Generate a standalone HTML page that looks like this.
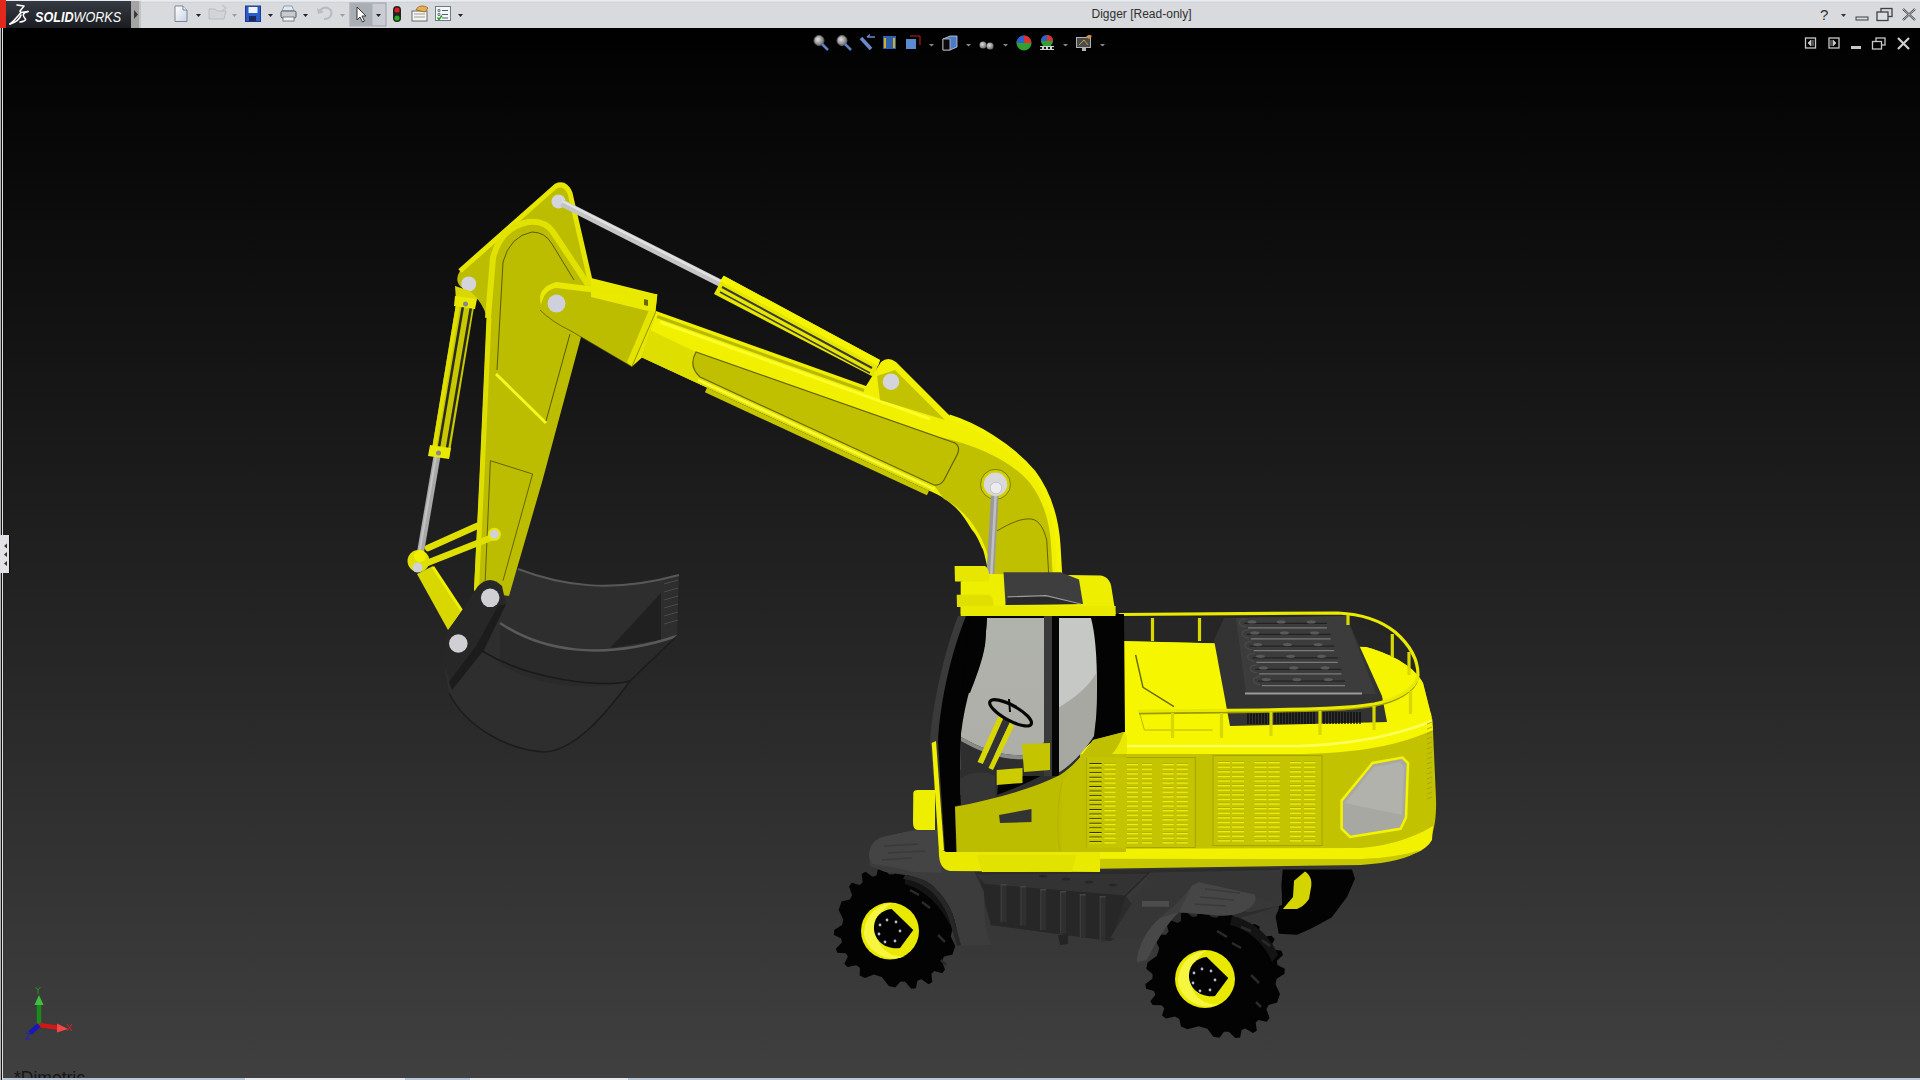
<!DOCTYPE html>
<html><head><meta charset="utf-8">
<style>
html,body{margin:0;padding:0;width:1920px;height:1080px;overflow:hidden;background:#000;font-family:"Liberation Sans",sans-serif;}
#view{position:absolute;left:0;top:28px;width:1920px;height:1052px;background:linear-gradient(#000 0%,#030303 3%,#202020 50%,#404040 100%);}
svg{position:absolute;left:0;top:0;}
#ttl{position:absolute;left:1091.5px;top:7px;font-size:12px;color:#303030;white-space:nowrap;}
#dim{position:absolute;left:14px;top:1067.5px;font-size:17.5px;line-height:20px;color:#141414;white-space:nowrap;}
#logo{position:absolute;left:35px;top:9px;font-size:14px;line-height:16px;color:#fff;font-style:italic;white-space:nowrap;transform:scaleX(0.9);transform-origin:0 0;}
#logo b{font-weight:bold;}
</style></head><body>
<div id="view"></div>
<svg id="exc" width="1920" height="1080" viewBox="0 0 1920 1080">
<defs>
<linearGradient id="rod" x1="0" y1="0" x2="1" y2="0"><stop offset="0" stop-color="#8a8a8a"/><stop offset="0.5" stop-color="#d8d8d8"/><stop offset="1" stop-color="#9a9a9a"/></linearGradient>
<linearGradient id="gl" x1="0" y1="0" x2="0" y2="1"><stop offset="0" stop-color="#b0b2ac"/><stop offset="1" stop-color="#acaea6"/></linearGradient>
</defs>
<!-- ========== rear right wheel ========== -->
<path d="M1282.8,869.5 L1352,869.5 L1355,878.7 L1347,897 L1331.6,917.4 L1311.3,928.6 L1297,934.7 L1278.7,933.7 L1275.6,916.4 L1278.7,909 Z" fill="#030303"/>
<path d="M1282.8,909 L1293,897 L1294,880.7 L1305,871.6 C1310,875 1312,880 1311.3,886 L1309,899 C1305,905 1300,908 1297,909 Z" fill="#d4d400"/>
<!-- ========== undercarriage ========== -->
<path d="M975,872 L1280,868 L1282,905 L1240,918 L1126,930 L1111,941 L991,925 Z" fill="#2c2c2c"/>
<path d="M1126,896 L1150,872.5 L1280,870 L1282,905 L1250,912 L1180,905 L1140,915 Z" fill="#383838"/>
<path d="M980,876 L1150,872.5 L1126,896 L1111,941 L991,925 Z" fill="#272727"/>
<path d="M976,874.6 L1147.5,873.5 L1124.6,895.4 L985,884 Z" fill="#333"/>
<g fill="#262626"><ellipse cx="1043" cy="876" rx="4" ry="1.5"/><ellipse cx="1066" cy="879" rx="4" ry="1.5"/><ellipse cx="1089" cy="882" rx="4" ry="1.5"/><ellipse cx="1113" cy="885" rx="4" ry="1.5"/></g>
<g><rect x="1000.6" y="884" width="6" height="38.0" fill="#2f2f2f"/><rect x="1000.6" y="884" width="1.2" height="38.0" fill="#3c3c3c"/><rect x="1000.6" y="884" width="6" height="1.5" fill="#444"/><rect x="1020.4" y="886" width="6" height="39.5" fill="#2f2f2f"/><rect x="1020.4" y="886" width="1.2" height="39.5" fill="#3c3c3c"/><rect x="1020.4" y="886" width="6" height="1.5" fill="#444"/><rect x="1040.2" y="889" width="6" height="41.0" fill="#2f2f2f"/><rect x="1040.2" y="889" width="1.2" height="41.0" fill="#3c3c3c"/><rect x="1040.2" y="889" width="6" height="1.5" fill="#444"/><rect x="1060.0" y="891" width="6" height="42.5" fill="#2f2f2f"/><rect x="1060.0" y="891" width="1.2" height="42.5" fill="#3c3c3c"/><rect x="1060.0" y="891" width="6" height="1.5" fill="#444"/><rect x="1079.8" y="894" width="6" height="44.0" fill="#2f2f2f"/><rect x="1079.8" y="894" width="1.2" height="44.0" fill="#3c3c3c"/><rect x="1079.8" y="894" width="6" height="1.5" fill="#444"/><rect x="1099.6" y="896" width="6" height="45.5" fill="#2f2f2f"/><rect x="1099.6" y="896" width="1.2" height="45.5" fill="#3c3c3c"/><rect x="1099.6" y="896" width="6" height="1.5" fill="#444"/></g>
<path d="M1155,890 L1225,893 L1222,897 L1152,895 Z" fill="#4a4a4a"/>
<path d="M1058,935 L1068,935 L1068,944 L1060,945 Z" fill="#242424"/>
<!-- ========== front wheel ========== -->
<path d="M955.3,946.0 L952.5,954.5 L944.0,956.5 L941.9,960.9 L945.0,969.5 L942.2,973.3 L934.3,971.1 L931.4,973.7 L932.3,982.1 L928.5,984.3 L921.4,979.3 L917.6,980.5 L915.8,988.2 L911.2,988.7 L905.1,981.8 L900.5,981.4 L895.2,987.4 L888.8,986.0 L881.8,977.1 L874.0,974.5 L864.9,978.1 L859.7,975.6 L859.9,967.8 L856.3,965.2 L847.5,967.0 L844.3,963.8 L847.9,956.6 L845.9,953.3 L837.3,952.8 L835.8,948.7 L841.9,942.5 L841.3,938.5 L833.9,935.1 L834.2,930.0 L842.1,925.0 L843.2,919.6 L838.7,910.0 L841.5,901.5 L850.0,899.5 L852.1,895.1 L849.0,886.5 L851.8,882.7 L859.7,884.9 L862.6,882.3 L861.7,873.9 L865.5,871.7 L872.6,876.7 L876.4,875.5 L878.2,867.8 L882.8,867.3 L888.9,874.2 L893.5,874.6 L898.8,868.6 L905.2,870.0 L912.2,878.9 L920.0,881.5 L929.1,877.9 L934.3,880.4 L934.1,888.2 L937.7,890.8 L946.5,889.0 L949.7,892.2 L946.1,899.4 L948.1,902.7 L956.7,903.2 L958.2,907.3 L952.1,913.5 L952.7,917.5 L960.1,920.9 L959.8,926.0 L951.9,931.0 L950.8,936.4 Z" fill="#030303"/>
<path d="M905,876 C925,880 945,895 955,915 L950,925 C940,905 925,890 905,884 Z" fill="#141414"/>
<g stroke="#2a2a2a" stroke-width="2.5"><path d="M910,890 L919,895"/><path d="M922,902 L930,908"/><path d="M932,888 L940,893"/><path d="M938,935 L945,942"/><path d="M941,960 L946,965"/></g>
<ellipse cx="890" cy="931" rx="29" ry="28.5" fill="#e8e800"/>
<path d="M864,935 C864,915 878,904 892,903 C880,910 874,925 878,940 C882,952 895,958 905,956 C895,962 870,958 864,935 Z" fill="#f6f640"/>
<path d="M891.7,909 L913.3,930 L900,948 C885,950 873,940 874,926 C875,916 882,910 891.7,909 Z" fill="#020202"/>
<g fill="#b8b8d0"><circle cx="887" cy="920" r="1.4"/><circle cx="896" cy="922" r="1.4"/><circle cx="900" cy="931" r="1.4"/><circle cx="895" cy="941" r="1.4"/><circle cx="885" cy="942" r="1.4"/><circle cx="879" cy="934" r="1.4"/><circle cx="880" cy="925" r="1.4"/></g>
<!-- front fender -->
<path d="M869,857 C869,845 875,838 887,836 L912,830.6 L950,830 L976,875 L984,892 L985,925 L991,945 L961,945 L955.6,925 C953,910 945,898 934,887 C925,879 915,876 905,875 L885,872 L870,866 Z" fill="#3c3c3c"/>
<path d="M905,875 C915,876 925,879 934,887 C945,898 953,910 955.6,925 L961,945 L957,946 L951,926 C948,912 941,901 931,891 C922,884 913,880 903,879 Z" fill="#262626"/>
<path d="M869,857 C869,845 875,838 887,836 L912,830.6 L938,830 L942,873 L912,871.7 L894,867.2 L872,864 Z" fill="#444"/>
<path d="M884,846 L918,844 M888,853 L925,851 M882,860 L912,858" stroke="#3a3a3a" stroke-width="1.3"/>
<!-- ========== rear left wheel ========== -->
<path d="M1280.0,994.1 L1277.1,1002.6 L1268.6,1004.9 L1266.4,1009.3 L1269.6,1017.8 L1266.8,1021.7 L1258.7,1019.9 L1255.7,1022.6 L1256.8,1030.8 L1252.9,1033.1 L1245.4,1028.6 L1241.6,1030.0 L1240.1,1037.5 L1235.4,1038.1 L1228.8,1031.8 L1224.0,1031.7 L1219.5,1037.7 L1213.4,1036.7 L1207.4,1028.8 L1198.8,1026.3 L1187.5,1029.2 L1180.9,1026.6 L1179.4,1018.9 L1175.0,1016.5 L1165.9,1018.5 L1162.0,1015.4 L1164.3,1008.3 L1161.5,1005.2 L1152.6,1005.1 L1150.3,1001.3 L1155.3,994.9 L1154.0,991.1 L1146.0,988.7 L1145.4,984.1 L1152.4,978.7 L1152.6,974.1 L1146.2,968.7 L1147.6,962.5 L1156.7,956.0 L1159.3,948.3 L1155.2,939.6 L1157.7,934.6 L1166.0,934.7 L1168.6,931.2 L1166.3,922.9 L1169.7,919.8 L1177.5,923.0 L1181.0,921.0 L1181.1,913.1 L1185.4,911.6 L1192.5,917.1 L1196.7,916.5 L1199.6,909.6 L1204.9,909.7 L1211.0,916.8 L1216.5,917.8 L1223.4,912.9 L1233.0,915.7 L1239.7,924.5 L1245.5,926.8 L1254.7,923.9 L1259.6,926.6 L1259.0,934.1 L1262.6,936.8 L1271.6,935.8 L1274.7,939.2 L1271.0,946.1 L1273.0,949.5 L1281.5,950.7 L1283.0,954.9 L1276.9,960.8 L1277.5,964.9 L1284.8,968.7 L1284.5,973.8 L1276.7,978.8 L1275.5,984.3 Z" fill="#030303"/>
<path d="M1232,916 C1252,920 1270,935 1278,955 L1272,962 C1265,945 1250,930 1230,925 Z" fill="#141414"/>
<g stroke="#2a2a2a" stroke-width="2.5"><path d="M1217,931 L1227,937"/><path d="M1232,943 L1241,948"/><path d="M1241,927 L1251,931"/><path d="M1251,975 L1259,983"/><path d="M1256,1002 L1261,1007"/><path d="M1262,940 L1270,946"/></g>
<ellipse cx="1205" cy="979" rx="30" ry="29" fill="#e8e800"/>
<path d="M1178,983 C1178,963 1192,952 1206,951 C1194,958 1188,973 1192,988 C1196,1000 1209,1006 1219,1004 C1209,1010 1184,1006 1178,983 Z" fill="#f6f640"/>
<path d="M1206.7,957 L1228.3,978 L1215,996 C1200,998 1188,988 1189,974 C1190,964 1197,958 1206.7,957 Z" fill="#020202"/>
<g fill="#b8b8d0"><circle cx="1202" cy="969" r="1.4"/><circle cx="1211" cy="971" r="1.4"/><circle cx="1215" cy="980" r="1.4"/><circle cx="1210" cy="990" r="1.4"/><circle cx="1200" cy="991" r="1.4"/><circle cx="1193" cy="983" r="1.4"/><circle cx="1194" cy="973" r="1.4"/></g>
<!-- rear fender -->
<path d="M1151,873 L1281,872 L1282,905 L1255.6,896.7 L1240,912 L1180,912 L1140,938 L1110,938 Z" fill="#363636"/>
<path d="M1142,901 L1169,901 L1169,906.7 L1142,906.7 Z" fill="#4c4c4c"/>
<path d="M1136.7,962.2 C1138,945 1148,928 1160,918 C1168,910 1178,905 1192,885.6 L1198.9,882.2 L1254.4,894.4 C1258,900 1252,907 1247.8,908.9 C1240,914 1232,915.6 1220,915.6 L1178.9,912.2 C1170,920 1160,935 1152,950 L1146.7,960 Z" fill="#3e3e3e"/>
<path d="M1192.2,885.6 L1198.9,882.2 L1254.4,894.4 C1258,900 1252,907 1247.8,908.9 C1240,914 1232,915.6 1220,915.6 L1178.9,912.2 Z" fill="#464646"/>
<path d="M1136.7,962.2 C1138,945 1148,928 1160,918 L1178.9,912.2 C1170,920 1160,935 1152,950 L1146.7,960 Z" fill="#484848"/>
<path d="M1205,889 L1240,893 M1200,897 L1234,900 M1195,904 L1226,906" stroke="#3a3a3a" stroke-width="1.3"/>
<!-- ========== bucket ========== -->
<path d="M518,569 C560,585 610,594 679,575 L677,636 L630,681 C605,715 575,750 545,752 C505,750 465,725 449,693 L444,664 L447,633 L484,581 Z" fill="#2e2e2e"/>
<path d="M500,623 C540,650 600,662 677,636 L630,681 C600,690 540,690 500,664 Z" fill="#2a2a2a"/>
<path d="M610,648 L661,593 L661,640 Z" fill="#202020"/>
<path d="M518,569 C560,585 610,594 679,575" stroke="#585858" stroke-width="2" fill="none"/>
<path d="M500,623 C540,650 600,662 677,636" stroke="#5a5a5a" stroke-width="2.5" fill="none"/>
<path d="M482,651 C530,680 600,688 630,681" stroke="#1a1a1a" stroke-width="1.5" fill="none"/>
<path d="M677,636 L630,681 C605,715 575,750 545,752 C505,750 465,725 449,693" stroke="#1c1c1c" stroke-width="1.5" fill="none"/>
<g stroke="#4a4a4a" stroke-width="1"><line x1="664" y1="584" x2="678" y2="580"/><line x1="664" y1="592" x2="678" y2="588"/><line x1="664" y1="600" x2="678" y2="596"/><line x1="664" y1="608" x2="678" y2="604"/><line x1="664" y1="616" x2="678" y2="612"/><line x1="664" y1="624" x2="678" y2="620"/></g>

<!-- ========== stick ========== -->
<path d="M556,186 Q565,182 570,193 L592,289 L580.5,339 L542.6,480 L509,596 L474,591 L479.6,480 L487,317 Q482,302 474,296 L461,287 Q454,280 460,271 Z" fill="#bcbc00"/>
<path d="M460,271 L556,186 Q565,182 570,193 L592,289" stroke="#e6e600" stroke-width="5" fill="none" stroke-linejoin="round"/>
<path d="M488,318 L493,258 Q500,228 528,222 Q545,220 553,232 L591,289" stroke="#e2e200" stroke-width="6" fill="none"/>
<path d="M497,370 L503,262 Q510,236 532,232 Q545,232 552,244 L574,280" stroke="#1a1a00" stroke-width="1" fill="none" opacity="0.6"/>
<line x1="496" y1="374" x2="546" y2="423" stroke="#f6f620" stroke-width="3"/>
<line x1="570" y1="334" x2="546" y2="421" stroke="#1a1a00" stroke-width="1" opacity="0.6"/>
<path d="M485.2,580.7 L490.4,460.7 L532.6,474 L503,580.7" stroke="#2a2a00" stroke-width="1" fill="none" opacity="0.6"/>
<path d="M489,318 L481.8,480 L476.5,590" stroke="#dede00" stroke-width="5"/>
<circle cx="558.5" cy="201.5" r="7" fill="#d4d4dc"/>
<circle cx="468.7" cy="283.9" r="7.5" fill="#d4d4dc"/>

<!-- ========== stick cylinder ========== -->
<line x1="437" y1="456" x2="420" y2="555" stroke="#a8a8a8" stroke-width="7"/>
<line x1="436" y1="456" x2="419" y2="555" stroke="#c4c4c4" stroke-width="2"/>
<path d="M455,286 L470,291 L478,299 L456,300 Z" fill="#d8d800"/>
<path d="M457,298 L475,301 L449,458 L431,455 Z" fill="#c8c800"/>
<path d="M457,298 L461,299 L435,456 L431,455 Z" fill="#e0e000"/>
<line x1="463" y1="306" x2="438" y2="453" stroke="#2a2a1a" stroke-width="2.5"/>
<line x1="471" y1="307" x2="446" y2="454" stroke="#2a2a1a" stroke-width="2.5"/>
<path d="M455,296 L477,299 L475,309 L454,306 Z" fill="#e8e800"/>
<path d="M430,445 L451,448 L449,459 L428,456 Z" fill="#e8e800"/>
<circle cx="465.5" cy="304" r="2.5" fill="#888"/>
<circle cx="438.5" cy="453" r="2.5" fill="#888"/>

<!-- ========== links ========== -->
<path d="M417,574 L433,566 L462,611 L448,630 Z" fill="#d8d800"/>
<line x1="433" y1="567" x2="462" y2="611" stroke="#f0f000" stroke-width="3"/>
<line x1="428" y1="548" x2="477" y2="526" stroke="#e0e000" stroke-width="6.5" stroke-linecap="round"/>
<line x1="422" y1="565" x2="493" y2="537" stroke="#e0e000" stroke-width="6.5" stroke-linecap="round"/>
<circle cx="494.4" cy="534.3" r="6.5" fill="#e8e800"/>
<circle cx="494.4" cy="534.3" r="4.5" fill="#d0d0d8"/>
<circle cx="418.5" cy="561" r="11" fill="#e0e000"/>
<circle cx="420" cy="556" r="6" fill="#f0f000"/>
<circle cx="417.6" cy="567.6" r="5" fill="#d0d0d8"/>
<path d="M478,586 Q490,574 502,586 L506,604 L482,651 L451,684 L444,664 L447,633 Z" fill="#272727"/>
<path d="M498,606 L506,604 L484,650 L452,690 L449,682 L476,646 Z" fill="#1c1c1c"/>
<circle cx="490.2" cy="597.8" r="9.3" fill="#cfcfd4"/>
<circle cx="458.3" cy="643.5" r="9.3" fill="#cfcfd4"/>

<!-- ========== boom ========== -->
<path d="M656,311 L866,386 L881,362 Q888,356 896,362 L951,417 C975,425 1010,445 1033,472 C1048,492 1056,515 1058,545 L1060,580 L989,580 L987,566 C985,556 983,548 982,548 C978,538 975,533 972,530 C966,520 962,514 956,508 C950,502 940,495 930,491 L642,357.4 Z" fill="#f0f000"/>
<path d="M696,352 L940,437 C985,447 1015,465 1030,483 C1043,500 1050,522 1051,545 L1053,580 L993,580 C991,562 986,547 979,534 C970,518 958,506 944,499 L934,485 L700,377 Q688,366 696,352 Z" fill="#c0c000"/>
<path d="M650,330 L696,352 Q688,366 700,377 L934,485 L930,491 L642,357.4 Z" fill="#dede00"/>
<path d="M706,390 L928,493" stroke="#c4c400" stroke-width="5"/>
<path d="M700,377 Q688,366 696,352 L955,443 Q961,447 957,455 L944,480 Q940,486 934,485 Z" fill="none" stroke="#4a4a00" stroke-width="1.2" opacity="0.8"/>
<path d="M698,380 L934,489" stroke="#f8f830" stroke-width="3"/>
<path d="M657,316.5 L864,390.5" stroke="#b8b800" stroke-width="3"/>
<path d="M660,322 L930,419" stroke="#ffff30" stroke-width="3" opacity="0.8"/>
<path d="M877,376 L895,370 L945,420 L880,400 Z" fill="#c2c200"/>
<path d="M949,417 C975,425 1010,445 1033,472 C1048,492 1056,515 1058,545 L1060,580" stroke="#f4f400" stroke-width="5" fill="none"/>
<path d="M997,531 C1010,523 1022,518 1031,519 C1040,520 1044,530 1046.7,540 L1049,580" stroke="#3a3a00" stroke-width="1" fill="none" opacity="0.7"/>
<circle cx="891" cy="381.7" r="8.3" fill="#d4d4dc"/>
<circle cx="995.5" cy="484.3" r="15" fill="#d0d000" stroke="#6a6a00" stroke-width="0.8"/>
<circle cx="995.5" cy="484.3" r="11.7" fill="#d8d8dc"/>
<circle cx="996" cy="488" r="5.8" fill="#ececf0" stroke="#b0b0b0" stroke-width="0.6"/>
<line x1="994.8" y1="496" x2="990.4" y2="575" stroke="#9a9a9a" stroke-width="7.8"/>
<line x1="995.6" y1="496" x2="991.2" y2="575" stroke="#c0c0c0" stroke-width="2.5"/>

<!-- ========== bracket (boom end) ========== -->
<path d="M540,310 Q534,290 556,282 L657.3,294.4 L655.3,312.8 L631.8,366.7 L571,331 Q552,322 540,310 Z" fill="#bcbc00"/>
<path d="M591,278 L657.3,294.4 L655.3,312.8 L591,297 Z" fill="#eaea00"/>
<path d="M644,299 L648,300 L648,306 L644,305 Z" fill="#6a6a00"/>
<path d="M541,305 Q536,288 556,282 L657.3,294.4 L655.3,300 L556,288 Q544,290 541,305 Z" fill="#e8e800"/>
<path d="M655.3,312.8 L656,313 L642,357.4 L631.8,366.7 Z" fill="#e6e600"/>
<path d="M655.3,312.8 L631.8,366.7 L627,362 L649,310 Z" fill="#e4e400"/>
<path d="M655.3,312.8 L631.8,366.7" stroke="#8a8a00" stroke-width="0.8"/>
<path d="M540,310 Q552,322 571,331 L631.8,366.7" stroke="#3a3a00" stroke-width="1" fill="none" opacity="0.6"/>
<circle cx="556.5" cy="303.6" r="9" fill="#d0d0dc"/>

<!-- ========== boom cylinder ========== -->
<line x1="562" y1="203" x2="722" y2="284" stroke="#c4c4c4" stroke-width="7.5"/>
<line x1="562" y1="201" x2="722" y2="282" stroke="#e2e2e2" stroke-width="2.5"/>
<path d="M723.7,275.7 L880,360 L873.7,377 L714,294 Z" fill="#e6e600"/>
<line x1="722" y1="287" x2="872" y2="368" stroke="#3a3a2a" stroke-width="2"/>
<line x1="720" y1="292" x2="870" y2="373" stroke="#3a3a2a" stroke-width="1.5"/>
<path d="M723.7,275.7 L880,360 L878,366 L720,281 Z" fill="#f4f400"/>

<!-- ========== body ========== -->
<path d="M1118,617 L1340,616 L1400,640 L1366,647 L1120,642 Z" fill="#262626"/>
<!-- whole body base -->
<path d="M1120,641 L1366,647 C1395,655 1415,668 1423,683 L1432.5,720 L1436,798 C1437,830 1430,848 1417,851 C1395,858 1380,862 1361,864 L1080,868 L1080,641 Z" fill="#c2c200"/>
<!-- deck surface -->
<path d="M1120,641 L1366,647 C1395,655 1415,668 1423,683 L1431,715 C1400,728 1360,738 1300,740 L1120,740 Z" fill="#f6f600"/>
<!-- bright band -->
<path d="M1080,738 L1300,738 C1360,736 1400,726 1431,713 L1433,730 C1400,745 1360,753 1300,754 L1080,754 Z" fill="#f6f600"/>
<path d="M1080,746 L1300,746 C1360,744 1400,734 1432,721" stroke="#ffff70" stroke-width="2.5" fill="none" opacity="0.8"/>
<!-- lower rim -->
<path d="M1080,849 L1361,848 C1385,846 1410,840 1433,826 L1432,840 C1425,852 1410,856 1395,858 L1361,859 L1080,859 Z" fill="#f2f200"/>
<path d="M1080,858.7 L1361,859 C1385,858 1405,855 1420,850 C1410,858 1390,863 1361,865 L1080,869 Z" fill="#c8c800"/>
<!-- grille panels -->
<rect x="1086.6" y="757.5" width="108.7" height="90" fill="#c4c400"/>
<rect x="1213" y="755.6" width="109" height="90" fill="#c4c400"/>
<rect x="1086.6" y="757.5" width="108.7" height="90" stroke="#a0a000" stroke-width="0.9" fill="none"/>
<rect x="1213" y="755.6" width="109" height="90" stroke="#a0a000" stroke-width="0.9" fill="none"/>
<rect x="1089.4" y="763.0" width="12.2" height="1" fill="#303000"/>
<rect x="1089.4" y="764.0" width="12.2" height="1.3" fill="#e0e000"/>
<rect x="1089.4" y="767.6" width="12.2" height="1" fill="#303000"/>
<rect x="1089.4" y="768.6" width="12.2" height="1.3" fill="#e0e000"/>
<rect x="1089.4" y="772.2" width="12.2" height="1" fill="#303000"/>
<rect x="1089.4" y="773.2" width="12.2" height="1.3" fill="#e0e000"/>
<rect x="1089.4" y="776.8" width="12.2" height="1" fill="#303000"/>
<rect x="1089.4" y="777.8" width="12.2" height="1.3" fill="#e0e000"/>
<rect x="1089.4" y="781.4" width="12.2" height="1" fill="#303000"/>
<rect x="1089.4" y="782.4" width="12.2" height="1.3" fill="#e0e000"/>
<rect x="1089.4" y="786.0" width="12.2" height="1" fill="#303000"/>
<rect x="1089.4" y="787.0" width="12.2" height="1.3" fill="#e0e000"/>
<rect x="1089.4" y="790.6" width="12.2" height="1" fill="#303000"/>
<rect x="1089.4" y="791.6" width="12.2" height="1.3" fill="#e0e000"/>
<rect x="1089.4" y="795.2" width="12.2" height="1" fill="#303000"/>
<rect x="1089.4" y="796.2" width="12.2" height="1.3" fill="#e0e000"/>
<rect x="1089.4" y="799.8" width="12.2" height="1" fill="#303000"/>
<rect x="1089.4" y="800.8" width="12.2" height="1.3" fill="#e0e000"/>
<rect x="1089.4" y="804.4" width="12.2" height="1" fill="#303000"/>
<rect x="1089.4" y="805.4" width="12.2" height="1.3" fill="#e0e000"/>
<rect x="1089.4" y="809.0" width="12.2" height="1" fill="#303000"/>
<rect x="1089.4" y="810.0" width="12.2" height="1.3" fill="#e0e000"/>
<rect x="1089.4" y="813.6" width="12.2" height="1" fill="#303000"/>
<rect x="1089.4" y="814.6" width="12.2" height="1.3" fill="#e0e000"/>
<rect x="1089.4" y="818.2" width="12.2" height="1" fill="#303000"/>
<rect x="1089.4" y="819.2" width="12.2" height="1.3" fill="#e0e000"/>
<rect x="1089.4" y="822.8" width="12.2" height="1" fill="#303000"/>
<rect x="1089.4" y="823.8" width="12.2" height="1.3" fill="#e0e000"/>
<rect x="1089.4" y="827.4" width="12.2" height="1" fill="#303000"/>
<rect x="1089.4" y="828.4" width="12.2" height="1.3" fill="#e0e000"/>
<rect x="1089.4" y="832.0" width="12.2" height="1" fill="#303000"/>
<rect x="1089.4" y="833.0" width="12.2" height="1.3" fill="#e0e000"/>
<rect x="1089.4" y="836.6" width="12.2" height="1" fill="#303000"/>
<rect x="1089.4" y="837.6" width="12.2" height="1.3" fill="#e0e000"/>
<rect x="1089.4" y="841.2" width="12.2" height="1" fill="#303000"/>
<rect x="1089.4" y="842.2" width="12.2" height="1.3" fill="#e0e000"/>
<rect x="1104.4" y="763.0" width="11.2" height="1" fill="#b2b200"/>
<rect x="1104.4" y="764.0" width="11.2" height="1.3" fill="#eeee10"/>
<rect x="1104.4" y="767.6" width="11.2" height="1" fill="#b2b200"/>
<rect x="1104.4" y="768.6" width="11.2" height="1.3" fill="#eeee10"/>
<rect x="1104.4" y="772.2" width="11.2" height="1" fill="#b2b200"/>
<rect x="1104.4" y="773.2" width="11.2" height="1.3" fill="#eeee10"/>
<rect x="1104.4" y="776.8" width="11.2" height="1" fill="#b2b200"/>
<rect x="1104.4" y="777.8" width="11.2" height="1.3" fill="#eeee10"/>
<rect x="1104.4" y="781.4" width="11.2" height="1" fill="#b2b200"/>
<rect x="1104.4" y="782.4" width="11.2" height="1.3" fill="#eeee10"/>
<rect x="1104.4" y="786.0" width="11.2" height="1" fill="#b2b200"/>
<rect x="1104.4" y="787.0" width="11.2" height="1.3" fill="#eeee10"/>
<rect x="1104.4" y="790.6" width="11.2" height="1" fill="#b2b200"/>
<rect x="1104.4" y="791.6" width="11.2" height="1.3" fill="#eeee10"/>
<rect x="1104.4" y="795.2" width="11.2" height="1" fill="#b2b200"/>
<rect x="1104.4" y="796.2" width="11.2" height="1.3" fill="#eeee10"/>
<rect x="1104.4" y="799.8" width="11.2" height="1" fill="#b2b200"/>
<rect x="1104.4" y="800.8" width="11.2" height="1.3" fill="#eeee10"/>
<rect x="1104.4" y="804.4" width="11.2" height="1" fill="#b2b200"/>
<rect x="1104.4" y="805.4" width="11.2" height="1.3" fill="#eeee10"/>
<rect x="1104.4" y="809.0" width="11.2" height="1" fill="#b2b200"/>
<rect x="1104.4" y="810.0" width="11.2" height="1.3" fill="#eeee10"/>
<rect x="1104.4" y="813.6" width="11.2" height="1" fill="#b2b200"/>
<rect x="1104.4" y="814.6" width="11.2" height="1.3" fill="#eeee10"/>
<rect x="1104.4" y="818.2" width="11.2" height="1" fill="#b2b200"/>
<rect x="1104.4" y="819.2" width="11.2" height="1.3" fill="#eeee10"/>
<rect x="1104.4" y="822.8" width="11.2" height="1" fill="#b2b200"/>
<rect x="1104.4" y="823.8" width="11.2" height="1.3" fill="#eeee10"/>
<rect x="1104.4" y="827.4" width="11.2" height="1" fill="#b2b200"/>
<rect x="1104.4" y="828.4" width="11.2" height="1.3" fill="#eeee10"/>
<rect x="1104.4" y="832.0" width="11.2" height="1" fill="#b2b200"/>
<rect x="1104.4" y="833.0" width="11.2" height="1.3" fill="#eeee10"/>
<rect x="1104.4" y="836.6" width="11.2" height="1" fill="#b2b200"/>
<rect x="1104.4" y="837.6" width="11.2" height="1.3" fill="#eeee10"/>
<rect x="1104.4" y="841.2" width="11.2" height="1" fill="#b2b200"/>
<rect x="1104.4" y="842.2" width="11.2" height="1.3" fill="#eeee10"/>
<rect x="1127.0" y="763.0" width="11.0" height="1" fill="#b2b200"/>
<rect x="1127.0" y="764.0" width="11.0" height="1.3" fill="#eeee10"/>
<rect x="1127.0" y="767.6" width="11.0" height="1" fill="#b2b200"/>
<rect x="1127.0" y="768.6" width="11.0" height="1.3" fill="#eeee10"/>
<rect x="1127.0" y="772.2" width="11.0" height="1" fill="#b2b200"/>
<rect x="1127.0" y="773.2" width="11.0" height="1.3" fill="#eeee10"/>
<rect x="1127.0" y="776.8" width="11.0" height="1" fill="#b2b200"/>
<rect x="1127.0" y="777.8" width="11.0" height="1.3" fill="#eeee10"/>
<rect x="1127.0" y="781.4" width="11.0" height="1" fill="#b2b200"/>
<rect x="1127.0" y="782.4" width="11.0" height="1.3" fill="#eeee10"/>
<rect x="1127.0" y="786.0" width="11.0" height="1" fill="#b2b200"/>
<rect x="1127.0" y="787.0" width="11.0" height="1.3" fill="#eeee10"/>
<rect x="1127.0" y="790.6" width="11.0" height="1" fill="#b2b200"/>
<rect x="1127.0" y="791.6" width="11.0" height="1.3" fill="#eeee10"/>
<rect x="1127.0" y="795.2" width="11.0" height="1" fill="#b2b200"/>
<rect x="1127.0" y="796.2" width="11.0" height="1.3" fill="#eeee10"/>
<rect x="1127.0" y="799.8" width="11.0" height="1" fill="#b2b200"/>
<rect x="1127.0" y="800.8" width="11.0" height="1.3" fill="#eeee10"/>
<rect x="1127.0" y="804.4" width="11.0" height="1" fill="#b2b200"/>
<rect x="1127.0" y="805.4" width="11.0" height="1.3" fill="#eeee10"/>
<rect x="1127.0" y="809.0" width="11.0" height="1" fill="#b2b200"/>
<rect x="1127.0" y="810.0" width="11.0" height="1.3" fill="#eeee10"/>
<rect x="1127.0" y="813.6" width="11.0" height="1" fill="#b2b200"/>
<rect x="1127.0" y="814.6" width="11.0" height="1.3" fill="#eeee10"/>
<rect x="1127.0" y="818.2" width="11.0" height="1" fill="#b2b200"/>
<rect x="1127.0" y="819.2" width="11.0" height="1.3" fill="#eeee10"/>
<rect x="1127.0" y="822.8" width="11.0" height="1" fill="#b2b200"/>
<rect x="1127.0" y="823.8" width="11.0" height="1.3" fill="#eeee10"/>
<rect x="1127.0" y="827.4" width="11.0" height="1" fill="#b2b200"/>
<rect x="1127.0" y="828.4" width="11.0" height="1.3" fill="#eeee10"/>
<rect x="1127.0" y="832.0" width="11.0" height="1" fill="#b2b200"/>
<rect x="1127.0" y="833.0" width="11.0" height="1.3" fill="#eeee10"/>
<rect x="1127.0" y="836.6" width="11.0" height="1" fill="#b2b200"/>
<rect x="1127.0" y="837.6" width="11.0" height="1.3" fill="#eeee10"/>
<rect x="1127.0" y="841.2" width="11.0" height="1" fill="#b2b200"/>
<rect x="1127.0" y="842.2" width="11.0" height="1.3" fill="#eeee10"/>
<rect x="1142.0" y="763.0" width="10.0" height="1" fill="#b2b200"/>
<rect x="1142.0" y="764.0" width="10.0" height="1.3" fill="#eeee10"/>
<rect x="1142.0" y="767.6" width="10.0" height="1" fill="#b2b200"/>
<rect x="1142.0" y="768.6" width="10.0" height="1.3" fill="#eeee10"/>
<rect x="1142.0" y="772.2" width="10.0" height="1" fill="#b2b200"/>
<rect x="1142.0" y="773.2" width="10.0" height="1.3" fill="#eeee10"/>
<rect x="1142.0" y="776.8" width="10.0" height="1" fill="#b2b200"/>
<rect x="1142.0" y="777.8" width="10.0" height="1.3" fill="#eeee10"/>
<rect x="1142.0" y="781.4" width="10.0" height="1" fill="#b2b200"/>
<rect x="1142.0" y="782.4" width="10.0" height="1.3" fill="#eeee10"/>
<rect x="1142.0" y="786.0" width="10.0" height="1" fill="#b2b200"/>
<rect x="1142.0" y="787.0" width="10.0" height="1.3" fill="#eeee10"/>
<rect x="1142.0" y="790.6" width="10.0" height="1" fill="#b2b200"/>
<rect x="1142.0" y="791.6" width="10.0" height="1.3" fill="#eeee10"/>
<rect x="1142.0" y="795.2" width="10.0" height="1" fill="#b2b200"/>
<rect x="1142.0" y="796.2" width="10.0" height="1.3" fill="#eeee10"/>
<rect x="1142.0" y="799.8" width="10.0" height="1" fill="#b2b200"/>
<rect x="1142.0" y="800.8" width="10.0" height="1.3" fill="#eeee10"/>
<rect x="1142.0" y="804.4" width="10.0" height="1" fill="#b2b200"/>
<rect x="1142.0" y="805.4" width="10.0" height="1.3" fill="#eeee10"/>
<rect x="1142.0" y="809.0" width="10.0" height="1" fill="#b2b200"/>
<rect x="1142.0" y="810.0" width="10.0" height="1.3" fill="#eeee10"/>
<rect x="1142.0" y="813.6" width="10.0" height="1" fill="#b2b200"/>
<rect x="1142.0" y="814.6" width="10.0" height="1.3" fill="#eeee10"/>
<rect x="1142.0" y="818.2" width="10.0" height="1" fill="#b2b200"/>
<rect x="1142.0" y="819.2" width="10.0" height="1.3" fill="#eeee10"/>
<rect x="1142.0" y="822.8" width="10.0" height="1" fill="#b2b200"/>
<rect x="1142.0" y="823.8" width="10.0" height="1.3" fill="#eeee10"/>
<rect x="1142.0" y="827.4" width="10.0" height="1" fill="#b2b200"/>
<rect x="1142.0" y="828.4" width="10.0" height="1.3" fill="#eeee10"/>
<rect x="1142.0" y="832.0" width="10.0" height="1" fill="#b2b200"/>
<rect x="1142.0" y="833.0" width="10.0" height="1.3" fill="#eeee10"/>
<rect x="1142.0" y="836.6" width="10.0" height="1" fill="#b2b200"/>
<rect x="1142.0" y="837.6" width="10.0" height="1.3" fill="#eeee10"/>
<rect x="1142.0" y="841.2" width="10.0" height="1" fill="#b2b200"/>
<rect x="1142.0" y="842.2" width="10.0" height="1.3" fill="#eeee10"/>
<rect x="1162.5" y="763.0" width="11.2" height="1" fill="#b2b200"/>
<rect x="1162.5" y="764.0" width="11.2" height="1.3" fill="#eeee10"/>
<rect x="1162.5" y="767.6" width="11.2" height="1" fill="#b2b200"/>
<rect x="1162.5" y="768.6" width="11.2" height="1.3" fill="#eeee10"/>
<rect x="1162.5" y="772.2" width="11.2" height="1" fill="#b2b200"/>
<rect x="1162.5" y="773.2" width="11.2" height="1.3" fill="#eeee10"/>
<rect x="1162.5" y="776.8" width="11.2" height="1" fill="#b2b200"/>
<rect x="1162.5" y="777.8" width="11.2" height="1.3" fill="#eeee10"/>
<rect x="1162.5" y="781.4" width="11.2" height="1" fill="#b2b200"/>
<rect x="1162.5" y="782.4" width="11.2" height="1.3" fill="#eeee10"/>
<rect x="1162.5" y="786.0" width="11.2" height="1" fill="#b2b200"/>
<rect x="1162.5" y="787.0" width="11.2" height="1.3" fill="#eeee10"/>
<rect x="1162.5" y="790.6" width="11.2" height="1" fill="#b2b200"/>
<rect x="1162.5" y="791.6" width="11.2" height="1.3" fill="#eeee10"/>
<rect x="1162.5" y="795.2" width="11.2" height="1" fill="#b2b200"/>
<rect x="1162.5" y="796.2" width="11.2" height="1.3" fill="#eeee10"/>
<rect x="1162.5" y="799.8" width="11.2" height="1" fill="#b2b200"/>
<rect x="1162.5" y="800.8" width="11.2" height="1.3" fill="#eeee10"/>
<rect x="1162.5" y="804.4" width="11.2" height="1" fill="#b2b200"/>
<rect x="1162.5" y="805.4" width="11.2" height="1.3" fill="#eeee10"/>
<rect x="1162.5" y="809.0" width="11.2" height="1" fill="#b2b200"/>
<rect x="1162.5" y="810.0" width="11.2" height="1.3" fill="#eeee10"/>
<rect x="1162.5" y="813.6" width="11.2" height="1" fill="#b2b200"/>
<rect x="1162.5" y="814.6" width="11.2" height="1.3" fill="#eeee10"/>
<rect x="1162.5" y="818.2" width="11.2" height="1" fill="#b2b200"/>
<rect x="1162.5" y="819.2" width="11.2" height="1.3" fill="#eeee10"/>
<rect x="1162.5" y="822.8" width="11.2" height="1" fill="#b2b200"/>
<rect x="1162.5" y="823.8" width="11.2" height="1.3" fill="#eeee10"/>
<rect x="1162.5" y="827.4" width="11.2" height="1" fill="#b2b200"/>
<rect x="1162.5" y="828.4" width="11.2" height="1.3" fill="#eeee10"/>
<rect x="1162.5" y="832.0" width="11.2" height="1" fill="#b2b200"/>
<rect x="1162.5" y="833.0" width="11.2" height="1.3" fill="#eeee10"/>
<rect x="1162.5" y="836.6" width="11.2" height="1" fill="#b2b200"/>
<rect x="1162.5" y="837.6" width="11.2" height="1.3" fill="#eeee10"/>
<rect x="1162.5" y="841.2" width="11.2" height="1" fill="#b2b200"/>
<rect x="1162.5" y="842.2" width="11.2" height="1.3" fill="#eeee10"/>
<rect x="1176.6" y="763.0" width="11.2" height="1" fill="#b2b200"/>
<rect x="1176.6" y="764.0" width="11.2" height="1.3" fill="#eeee10"/>
<rect x="1176.6" y="767.6" width="11.2" height="1" fill="#b2b200"/>
<rect x="1176.6" y="768.6" width="11.2" height="1.3" fill="#eeee10"/>
<rect x="1176.6" y="772.2" width="11.2" height="1" fill="#b2b200"/>
<rect x="1176.6" y="773.2" width="11.2" height="1.3" fill="#eeee10"/>
<rect x="1176.6" y="776.8" width="11.2" height="1" fill="#b2b200"/>
<rect x="1176.6" y="777.8" width="11.2" height="1.3" fill="#eeee10"/>
<rect x="1176.6" y="781.4" width="11.2" height="1" fill="#b2b200"/>
<rect x="1176.6" y="782.4" width="11.2" height="1.3" fill="#eeee10"/>
<rect x="1176.6" y="786.0" width="11.2" height="1" fill="#b2b200"/>
<rect x="1176.6" y="787.0" width="11.2" height="1.3" fill="#eeee10"/>
<rect x="1176.6" y="790.6" width="11.2" height="1" fill="#b2b200"/>
<rect x="1176.6" y="791.6" width="11.2" height="1.3" fill="#eeee10"/>
<rect x="1176.6" y="795.2" width="11.2" height="1" fill="#b2b200"/>
<rect x="1176.6" y="796.2" width="11.2" height="1.3" fill="#eeee10"/>
<rect x="1176.6" y="799.8" width="11.2" height="1" fill="#b2b200"/>
<rect x="1176.6" y="800.8" width="11.2" height="1.3" fill="#eeee10"/>
<rect x="1176.6" y="804.4" width="11.2" height="1" fill="#b2b200"/>
<rect x="1176.6" y="805.4" width="11.2" height="1.3" fill="#eeee10"/>
<rect x="1176.6" y="809.0" width="11.2" height="1" fill="#b2b200"/>
<rect x="1176.6" y="810.0" width="11.2" height="1.3" fill="#eeee10"/>
<rect x="1176.6" y="813.6" width="11.2" height="1" fill="#b2b200"/>
<rect x="1176.6" y="814.6" width="11.2" height="1.3" fill="#eeee10"/>
<rect x="1176.6" y="818.2" width="11.2" height="1" fill="#b2b200"/>
<rect x="1176.6" y="819.2" width="11.2" height="1.3" fill="#eeee10"/>
<rect x="1176.6" y="822.8" width="11.2" height="1" fill="#b2b200"/>
<rect x="1176.6" y="823.8" width="11.2" height="1.3" fill="#eeee10"/>
<rect x="1176.6" y="827.4" width="11.2" height="1" fill="#b2b200"/>
<rect x="1176.6" y="828.4" width="11.2" height="1.3" fill="#eeee10"/>
<rect x="1176.6" y="832.0" width="11.2" height="1" fill="#b2b200"/>
<rect x="1176.6" y="833.0" width="11.2" height="1.3" fill="#eeee10"/>
<rect x="1176.6" y="836.6" width="11.2" height="1" fill="#b2b200"/>
<rect x="1176.6" y="837.6" width="11.2" height="1.3" fill="#eeee10"/>
<rect x="1176.6" y="841.2" width="11.2" height="1" fill="#b2b200"/>
<rect x="1176.6" y="842.2" width="11.2" height="1.3" fill="#eeee10"/>
<rect x="1217.8" y="761.0" width="12.2" height="1" fill="#b2b200"/>
<rect x="1217.8" y="762.0" width="12.2" height="1.3" fill="#eeee10"/>
<rect x="1217.8" y="765.6" width="12.2" height="1" fill="#b2b200"/>
<rect x="1217.8" y="766.6" width="12.2" height="1.3" fill="#eeee10"/>
<rect x="1217.8" y="770.2" width="12.2" height="1" fill="#b2b200"/>
<rect x="1217.8" y="771.2" width="12.2" height="1.3" fill="#eeee10"/>
<rect x="1217.8" y="774.8" width="12.2" height="1" fill="#b2b200"/>
<rect x="1217.8" y="775.8" width="12.2" height="1.3" fill="#eeee10"/>
<rect x="1217.8" y="779.4" width="12.2" height="1" fill="#b2b200"/>
<rect x="1217.8" y="780.4" width="12.2" height="1.3" fill="#eeee10"/>
<rect x="1217.8" y="784.0" width="12.2" height="1" fill="#b2b200"/>
<rect x="1217.8" y="785.0" width="12.2" height="1.3" fill="#eeee10"/>
<rect x="1217.8" y="788.6" width="12.2" height="1" fill="#b2b200"/>
<rect x="1217.8" y="789.6" width="12.2" height="1.3" fill="#eeee10"/>
<rect x="1217.8" y="793.2" width="12.2" height="1" fill="#b2b200"/>
<rect x="1217.8" y="794.2" width="12.2" height="1.3" fill="#eeee10"/>
<rect x="1217.8" y="797.8" width="12.2" height="1" fill="#b2b200"/>
<rect x="1217.8" y="798.8" width="12.2" height="1.3" fill="#eeee10"/>
<rect x="1217.8" y="802.4" width="12.2" height="1" fill="#b2b200"/>
<rect x="1217.8" y="803.4" width="12.2" height="1.3" fill="#eeee10"/>
<rect x="1217.8" y="807.0" width="12.2" height="1" fill="#b2b200"/>
<rect x="1217.8" y="808.0" width="12.2" height="1.3" fill="#eeee10"/>
<rect x="1217.8" y="811.6" width="12.2" height="1" fill="#b2b200"/>
<rect x="1217.8" y="812.6" width="12.2" height="1.3" fill="#eeee10"/>
<rect x="1217.8" y="816.2" width="12.2" height="1" fill="#b2b200"/>
<rect x="1217.8" y="817.2" width="12.2" height="1.3" fill="#eeee10"/>
<rect x="1217.8" y="820.8" width="12.2" height="1" fill="#b2b200"/>
<rect x="1217.8" y="821.8" width="12.2" height="1.3" fill="#eeee10"/>
<rect x="1217.8" y="825.4" width="12.2" height="1" fill="#b2b200"/>
<rect x="1217.8" y="826.4" width="12.2" height="1.3" fill="#eeee10"/>
<rect x="1217.8" y="830.0" width="12.2" height="1" fill="#b2b200"/>
<rect x="1217.8" y="831.0" width="12.2" height="1.3" fill="#eeee10"/>
<rect x="1217.8" y="834.6" width="12.2" height="1" fill="#b2b200"/>
<rect x="1217.8" y="835.6" width="12.2" height="1.3" fill="#eeee10"/>
<rect x="1217.8" y="839.2" width="12.2" height="1" fill="#b2b200"/>
<rect x="1217.8" y="840.2" width="12.2" height="1.3" fill="#eeee10"/>
<rect x="1232.0" y="761.0" width="12.0" height="1" fill="#b2b200"/>
<rect x="1232.0" y="762.0" width="12.0" height="1.3" fill="#eeee10"/>
<rect x="1232.0" y="765.6" width="12.0" height="1" fill="#b2b200"/>
<rect x="1232.0" y="766.6" width="12.0" height="1.3" fill="#eeee10"/>
<rect x="1232.0" y="770.2" width="12.0" height="1" fill="#b2b200"/>
<rect x="1232.0" y="771.2" width="12.0" height="1.3" fill="#eeee10"/>
<rect x="1232.0" y="774.8" width="12.0" height="1" fill="#b2b200"/>
<rect x="1232.0" y="775.8" width="12.0" height="1.3" fill="#eeee10"/>
<rect x="1232.0" y="779.4" width="12.0" height="1" fill="#b2b200"/>
<rect x="1232.0" y="780.4" width="12.0" height="1.3" fill="#eeee10"/>
<rect x="1232.0" y="784.0" width="12.0" height="1" fill="#b2b200"/>
<rect x="1232.0" y="785.0" width="12.0" height="1.3" fill="#eeee10"/>
<rect x="1232.0" y="788.6" width="12.0" height="1" fill="#b2b200"/>
<rect x="1232.0" y="789.6" width="12.0" height="1.3" fill="#eeee10"/>
<rect x="1232.0" y="793.2" width="12.0" height="1" fill="#b2b200"/>
<rect x="1232.0" y="794.2" width="12.0" height="1.3" fill="#eeee10"/>
<rect x="1232.0" y="797.8" width="12.0" height="1" fill="#b2b200"/>
<rect x="1232.0" y="798.8" width="12.0" height="1.3" fill="#eeee10"/>
<rect x="1232.0" y="802.4" width="12.0" height="1" fill="#b2b200"/>
<rect x="1232.0" y="803.4" width="12.0" height="1.3" fill="#eeee10"/>
<rect x="1232.0" y="807.0" width="12.0" height="1" fill="#b2b200"/>
<rect x="1232.0" y="808.0" width="12.0" height="1.3" fill="#eeee10"/>
<rect x="1232.0" y="811.6" width="12.0" height="1" fill="#b2b200"/>
<rect x="1232.0" y="812.6" width="12.0" height="1.3" fill="#eeee10"/>
<rect x="1232.0" y="816.2" width="12.0" height="1" fill="#b2b200"/>
<rect x="1232.0" y="817.2" width="12.0" height="1.3" fill="#eeee10"/>
<rect x="1232.0" y="820.8" width="12.0" height="1" fill="#b2b200"/>
<rect x="1232.0" y="821.8" width="12.0" height="1.3" fill="#eeee10"/>
<rect x="1232.0" y="825.4" width="12.0" height="1" fill="#b2b200"/>
<rect x="1232.0" y="826.4" width="12.0" height="1.3" fill="#eeee10"/>
<rect x="1232.0" y="830.0" width="12.0" height="1" fill="#b2b200"/>
<rect x="1232.0" y="831.0" width="12.0" height="1.3" fill="#eeee10"/>
<rect x="1232.0" y="834.6" width="12.0" height="1" fill="#b2b200"/>
<rect x="1232.0" y="835.6" width="12.0" height="1.3" fill="#eeee10"/>
<rect x="1232.0" y="839.2" width="12.0" height="1" fill="#b2b200"/>
<rect x="1232.0" y="840.2" width="12.0" height="1.3" fill="#eeee10"/>
<rect x="1254.4" y="761.0" width="12.2" height="1" fill="#b2b200"/>
<rect x="1254.4" y="762.0" width="12.2" height="1.3" fill="#eeee10"/>
<rect x="1254.4" y="765.6" width="12.2" height="1" fill="#b2b200"/>
<rect x="1254.4" y="766.6" width="12.2" height="1.3" fill="#eeee10"/>
<rect x="1254.4" y="770.2" width="12.2" height="1" fill="#b2b200"/>
<rect x="1254.4" y="771.2" width="12.2" height="1.3" fill="#eeee10"/>
<rect x="1254.4" y="774.8" width="12.2" height="1" fill="#b2b200"/>
<rect x="1254.4" y="775.8" width="12.2" height="1.3" fill="#eeee10"/>
<rect x="1254.4" y="779.4" width="12.2" height="1" fill="#b2b200"/>
<rect x="1254.4" y="780.4" width="12.2" height="1.3" fill="#eeee10"/>
<rect x="1254.4" y="784.0" width="12.2" height="1" fill="#b2b200"/>
<rect x="1254.4" y="785.0" width="12.2" height="1.3" fill="#eeee10"/>
<rect x="1254.4" y="788.6" width="12.2" height="1" fill="#b2b200"/>
<rect x="1254.4" y="789.6" width="12.2" height="1.3" fill="#eeee10"/>
<rect x="1254.4" y="793.2" width="12.2" height="1" fill="#b2b200"/>
<rect x="1254.4" y="794.2" width="12.2" height="1.3" fill="#eeee10"/>
<rect x="1254.4" y="797.8" width="12.2" height="1" fill="#b2b200"/>
<rect x="1254.4" y="798.8" width="12.2" height="1.3" fill="#eeee10"/>
<rect x="1254.4" y="802.4" width="12.2" height="1" fill="#b2b200"/>
<rect x="1254.4" y="803.4" width="12.2" height="1.3" fill="#eeee10"/>
<rect x="1254.4" y="807.0" width="12.2" height="1" fill="#b2b200"/>
<rect x="1254.4" y="808.0" width="12.2" height="1.3" fill="#eeee10"/>
<rect x="1254.4" y="811.6" width="12.2" height="1" fill="#b2b200"/>
<rect x="1254.4" y="812.6" width="12.2" height="1.3" fill="#eeee10"/>
<rect x="1254.4" y="816.2" width="12.2" height="1" fill="#b2b200"/>
<rect x="1254.4" y="817.2" width="12.2" height="1.3" fill="#eeee10"/>
<rect x="1254.4" y="820.8" width="12.2" height="1" fill="#b2b200"/>
<rect x="1254.4" y="821.8" width="12.2" height="1.3" fill="#eeee10"/>
<rect x="1254.4" y="825.4" width="12.2" height="1" fill="#b2b200"/>
<rect x="1254.4" y="826.4" width="12.2" height="1.3" fill="#eeee10"/>
<rect x="1254.4" y="830.0" width="12.2" height="1" fill="#b2b200"/>
<rect x="1254.4" y="831.0" width="12.2" height="1.3" fill="#eeee10"/>
<rect x="1254.4" y="834.6" width="12.2" height="1" fill="#b2b200"/>
<rect x="1254.4" y="835.6" width="12.2" height="1.3" fill="#eeee10"/>
<rect x="1254.4" y="839.2" width="12.2" height="1" fill="#b2b200"/>
<rect x="1254.4" y="840.2" width="12.2" height="1.3" fill="#eeee10"/>
<rect x="1268.4" y="761.0" width="11.3" height="1" fill="#b2b200"/>
<rect x="1268.4" y="762.0" width="11.3" height="1.3" fill="#eeee10"/>
<rect x="1268.4" y="765.6" width="11.3" height="1" fill="#b2b200"/>
<rect x="1268.4" y="766.6" width="11.3" height="1.3" fill="#eeee10"/>
<rect x="1268.4" y="770.2" width="11.3" height="1" fill="#b2b200"/>
<rect x="1268.4" y="771.2" width="11.3" height="1.3" fill="#eeee10"/>
<rect x="1268.4" y="774.8" width="11.3" height="1" fill="#b2b200"/>
<rect x="1268.4" y="775.8" width="11.3" height="1.3" fill="#eeee10"/>
<rect x="1268.4" y="779.4" width="11.3" height="1" fill="#b2b200"/>
<rect x="1268.4" y="780.4" width="11.3" height="1.3" fill="#eeee10"/>
<rect x="1268.4" y="784.0" width="11.3" height="1" fill="#b2b200"/>
<rect x="1268.4" y="785.0" width="11.3" height="1.3" fill="#eeee10"/>
<rect x="1268.4" y="788.6" width="11.3" height="1" fill="#b2b200"/>
<rect x="1268.4" y="789.6" width="11.3" height="1.3" fill="#eeee10"/>
<rect x="1268.4" y="793.2" width="11.3" height="1" fill="#b2b200"/>
<rect x="1268.4" y="794.2" width="11.3" height="1.3" fill="#eeee10"/>
<rect x="1268.4" y="797.8" width="11.3" height="1" fill="#b2b200"/>
<rect x="1268.4" y="798.8" width="11.3" height="1.3" fill="#eeee10"/>
<rect x="1268.4" y="802.4" width="11.3" height="1" fill="#b2b200"/>
<rect x="1268.4" y="803.4" width="11.3" height="1.3" fill="#eeee10"/>
<rect x="1268.4" y="807.0" width="11.3" height="1" fill="#b2b200"/>
<rect x="1268.4" y="808.0" width="11.3" height="1.3" fill="#eeee10"/>
<rect x="1268.4" y="811.6" width="11.3" height="1" fill="#b2b200"/>
<rect x="1268.4" y="812.6" width="11.3" height="1.3" fill="#eeee10"/>
<rect x="1268.4" y="816.2" width="11.3" height="1" fill="#b2b200"/>
<rect x="1268.4" y="817.2" width="11.3" height="1.3" fill="#eeee10"/>
<rect x="1268.4" y="820.8" width="11.3" height="1" fill="#b2b200"/>
<rect x="1268.4" y="821.8" width="11.3" height="1.3" fill="#eeee10"/>
<rect x="1268.4" y="825.4" width="11.3" height="1" fill="#b2b200"/>
<rect x="1268.4" y="826.4" width="11.3" height="1.3" fill="#eeee10"/>
<rect x="1268.4" y="830.0" width="11.3" height="1" fill="#b2b200"/>
<rect x="1268.4" y="831.0" width="11.3" height="1.3" fill="#eeee10"/>
<rect x="1268.4" y="834.6" width="11.3" height="1" fill="#b2b200"/>
<rect x="1268.4" y="835.6" width="11.3" height="1.3" fill="#eeee10"/>
<rect x="1268.4" y="839.2" width="11.3" height="1" fill="#b2b200"/>
<rect x="1268.4" y="840.2" width="11.3" height="1.3" fill="#eeee10"/>
<rect x="1290.0" y="761.0" width="11.0" height="1" fill="#b2b200"/>
<rect x="1290.0" y="762.0" width="11.0" height="1.3" fill="#eeee10"/>
<rect x="1290.0" y="765.6" width="11.0" height="1" fill="#b2b200"/>
<rect x="1290.0" y="766.6" width="11.0" height="1.3" fill="#eeee10"/>
<rect x="1290.0" y="770.2" width="11.0" height="1" fill="#b2b200"/>
<rect x="1290.0" y="771.2" width="11.0" height="1.3" fill="#eeee10"/>
<rect x="1290.0" y="774.8" width="11.0" height="1" fill="#b2b200"/>
<rect x="1290.0" y="775.8" width="11.0" height="1.3" fill="#eeee10"/>
<rect x="1290.0" y="779.4" width="11.0" height="1" fill="#b2b200"/>
<rect x="1290.0" y="780.4" width="11.0" height="1.3" fill="#eeee10"/>
<rect x="1290.0" y="784.0" width="11.0" height="1" fill="#b2b200"/>
<rect x="1290.0" y="785.0" width="11.0" height="1.3" fill="#eeee10"/>
<rect x="1290.0" y="788.6" width="11.0" height="1" fill="#b2b200"/>
<rect x="1290.0" y="789.6" width="11.0" height="1.3" fill="#eeee10"/>
<rect x="1290.0" y="793.2" width="11.0" height="1" fill="#b2b200"/>
<rect x="1290.0" y="794.2" width="11.0" height="1.3" fill="#eeee10"/>
<rect x="1290.0" y="797.8" width="11.0" height="1" fill="#b2b200"/>
<rect x="1290.0" y="798.8" width="11.0" height="1.3" fill="#eeee10"/>
<rect x="1290.0" y="802.4" width="11.0" height="1" fill="#b2b200"/>
<rect x="1290.0" y="803.4" width="11.0" height="1.3" fill="#eeee10"/>
<rect x="1290.0" y="807.0" width="11.0" height="1" fill="#b2b200"/>
<rect x="1290.0" y="808.0" width="11.0" height="1.3" fill="#eeee10"/>
<rect x="1290.0" y="811.6" width="11.0" height="1" fill="#b2b200"/>
<rect x="1290.0" y="812.6" width="11.0" height="1.3" fill="#eeee10"/>
<rect x="1290.0" y="816.2" width="11.0" height="1" fill="#b2b200"/>
<rect x="1290.0" y="817.2" width="11.0" height="1.3" fill="#eeee10"/>
<rect x="1290.0" y="820.8" width="11.0" height="1" fill="#b2b200"/>
<rect x="1290.0" y="821.8" width="11.0" height="1.3" fill="#eeee10"/>
<rect x="1290.0" y="825.4" width="11.0" height="1" fill="#b2b200"/>
<rect x="1290.0" y="826.4" width="11.0" height="1.3" fill="#eeee10"/>
<rect x="1290.0" y="830.0" width="11.0" height="1" fill="#b2b200"/>
<rect x="1290.0" y="831.0" width="11.0" height="1.3" fill="#eeee10"/>
<rect x="1290.0" y="834.6" width="11.0" height="1" fill="#b2b200"/>
<rect x="1290.0" y="835.6" width="11.0" height="1.3" fill="#eeee10"/>
<rect x="1290.0" y="839.2" width="11.0" height="1" fill="#b2b200"/>
<rect x="1290.0" y="840.2" width="11.0" height="1.3" fill="#eeee10"/>
<rect x="1304.0" y="761.0" width="11.3" height="1" fill="#b2b200"/>
<rect x="1304.0" y="762.0" width="11.3" height="1.3" fill="#eeee10"/>
<rect x="1304.0" y="765.6" width="11.3" height="1" fill="#b2b200"/>
<rect x="1304.0" y="766.6" width="11.3" height="1.3" fill="#eeee10"/>
<rect x="1304.0" y="770.2" width="11.3" height="1" fill="#b2b200"/>
<rect x="1304.0" y="771.2" width="11.3" height="1.3" fill="#eeee10"/>
<rect x="1304.0" y="774.8" width="11.3" height="1" fill="#b2b200"/>
<rect x="1304.0" y="775.8" width="11.3" height="1.3" fill="#eeee10"/>
<rect x="1304.0" y="779.4" width="11.3" height="1" fill="#b2b200"/>
<rect x="1304.0" y="780.4" width="11.3" height="1.3" fill="#eeee10"/>
<rect x="1304.0" y="784.0" width="11.3" height="1" fill="#b2b200"/>
<rect x="1304.0" y="785.0" width="11.3" height="1.3" fill="#eeee10"/>
<rect x="1304.0" y="788.6" width="11.3" height="1" fill="#b2b200"/>
<rect x="1304.0" y="789.6" width="11.3" height="1.3" fill="#eeee10"/>
<rect x="1304.0" y="793.2" width="11.3" height="1" fill="#b2b200"/>
<rect x="1304.0" y="794.2" width="11.3" height="1.3" fill="#eeee10"/>
<rect x="1304.0" y="797.8" width="11.3" height="1" fill="#b2b200"/>
<rect x="1304.0" y="798.8" width="11.3" height="1.3" fill="#eeee10"/>
<rect x="1304.0" y="802.4" width="11.3" height="1" fill="#b2b200"/>
<rect x="1304.0" y="803.4" width="11.3" height="1.3" fill="#eeee10"/>
<rect x="1304.0" y="807.0" width="11.3" height="1" fill="#b2b200"/>
<rect x="1304.0" y="808.0" width="11.3" height="1.3" fill="#eeee10"/>
<rect x="1304.0" y="811.6" width="11.3" height="1" fill="#b2b200"/>
<rect x="1304.0" y="812.6" width="11.3" height="1.3" fill="#eeee10"/>
<rect x="1304.0" y="816.2" width="11.3" height="1" fill="#b2b200"/>
<rect x="1304.0" y="817.2" width="11.3" height="1.3" fill="#eeee10"/>
<rect x="1304.0" y="820.8" width="11.3" height="1" fill="#b2b200"/>
<rect x="1304.0" y="821.8" width="11.3" height="1.3" fill="#eeee10"/>
<rect x="1304.0" y="825.4" width="11.3" height="1" fill="#b2b200"/>
<rect x="1304.0" y="826.4" width="11.3" height="1.3" fill="#eeee10"/>
<rect x="1304.0" y="830.0" width="11.3" height="1" fill="#b2b200"/>
<rect x="1304.0" y="831.0" width="11.3" height="1.3" fill="#eeee10"/>
<rect x="1304.0" y="834.6" width="11.3" height="1" fill="#b2b200"/>
<rect x="1304.0" y="835.6" width="11.3" height="1.3" fill="#eeee10"/>
<rect x="1304.0" y="839.2" width="11.3" height="1" fill="#b2b200"/>
<rect x="1304.0" y="840.2" width="11.3" height="1.3" fill="#eeee10"/>
<!-- right side vertical grille -->
<g stroke="#a0a000" stroke-width="0.8">
<path d="M1427,724 l5,-2 M1427,729 l5,-2 M1427,734 l5,-2 M1427,739 l5,-2 M1427,744 l5,-2 M1427,749 l5,-2 M1427,754 l5,-2 M1427,759 l5,-2 M1427,764 l5,-2 M1427,769 l5,-2 M1427,774 l5,-2 M1427,779 l5,-2 M1427,784 l5,-2 M1427,789 l5,-2 M1427,794 l5,-2 M1427,799 l5,-2"/>
</g>
<!-- deck groove lines -->
<path d="M1135.6,654.8 L1143,687.4 L1174,706.7" stroke="#6a6a00" stroke-width="1.5" fill="none"/>
<path d="M1140,714 L1144.4,730 L1212.6,730" stroke="#b8b800" stroke-width="1" fill="none"/>
<!-- window -->
<path d="M1341.6,800.6 L1372.5,763 L1402.5,757.5 L1408,763 L1406,817.5 L1400.6,828.75 L1350,837 L1341.6,828.75 Z" fill="#a8a8a2" stroke="#f4f400" stroke-width="2.5"/>
<path d="M1345,803 L1374,767 L1400,762 L1404,767 L1402,815 Z" fill="#b2b2ac"/>

<!-- engine cover -->
<path d="M1224,618 L1346,616 L1382,696 L1387,722 L1230,726 L1214,640 Z" fill="#333333"/>
<path d="M1236,618 L1346,616 L1376,694 L1246,694 Z" fill="#3c3c3c"/>
<g><path d="M1244.0,623.4 L1327.0,623.4" stroke="#222" stroke-width="1.2"/><path d="M1246.0,626.9 C1236.0,625.9 1238.0,618.9 1246.0,618.9" stroke="#4a4a4a" stroke-width="1.2" fill="none"/><path d="M1248.0,627.9 L1327.0,627.9" stroke="#7a7a7a" stroke-width="1.3"/><ellipse cx="1252.0" cy="621.9" rx="4.5" ry="1.6" fill="#5a5a5a"/><ellipse cx="1281.2" cy="621.9" rx="4.5" ry="1.6" fill="#5a5a5a"/><ellipse cx="1311.2" cy="621.9" rx="4.5" ry="1.6" fill="#5a5a5a"/><path d="M1246.8,634.4 L1330.6,634.4" stroke="#222" stroke-width="1.2"/><path d="M1248.8,637.9 C1238.8,636.9 1240.8,629.9 1248.8,629.9" stroke="#4a4a4a" stroke-width="1.2" fill="none"/><path d="M1250.8,638.9 L1330.6,638.9" stroke="#7a7a7a" stroke-width="1.3"/><ellipse cx="1254.8" cy="632.9" rx="4.5" ry="1.6" fill="#5a5a5a"/><ellipse cx="1284.3" cy="632.9" rx="4.5" ry="1.6" fill="#5a5a5a"/><ellipse cx="1314.6" cy="632.9" rx="4.5" ry="1.6" fill="#5a5a5a"/><path d="M1249.6,646.1 L1334.2,646.1" stroke="#222" stroke-width="1.2"/><path d="M1251.6,649.6 C1241.6,648.6 1243.6,641.6 1251.6,641.6" stroke="#4a4a4a" stroke-width="1.2" fill="none"/><path d="M1253.6,650.6 L1334.2,650.6" stroke="#7a7a7a" stroke-width="1.3"/><ellipse cx="1257.6" cy="644.6" rx="4.5" ry="1.6" fill="#5a5a5a"/><ellipse cx="1287.5" cy="644.6" rx="4.5" ry="1.6" fill="#5a5a5a"/><ellipse cx="1318.1" cy="644.6" rx="4.5" ry="1.6" fill="#5a5a5a"/><path d="M1252.4,657.8 L1337.8,657.8" stroke="#222" stroke-width="1.2"/><path d="M1254.4,661.3 C1244.4,660.3 1246.4,653.3 1254.4,653.3" stroke="#4a4a4a" stroke-width="1.2" fill="none"/><path d="M1256.4,662.3 L1337.8,662.3" stroke="#7a7a7a" stroke-width="1.3"/><ellipse cx="1260.5" cy="656.3" rx="4.5" ry="1.6" fill="#5a5a5a"/><ellipse cx="1290.6" cy="656.3" rx="4.5" ry="1.6" fill="#5a5a5a"/><ellipse cx="1321.5" cy="656.3" rx="4.5" ry="1.6" fill="#5a5a5a"/><path d="M1255.2,669.4 L1341.4,669.4" stroke="#222" stroke-width="1.2"/><path d="M1257.2,672.9 C1247.2,671.9 1249.2,664.9 1257.2,664.9" stroke="#4a4a4a" stroke-width="1.2" fill="none"/><path d="M1259.2,673.9 L1341.4,673.9" stroke="#7a7a7a" stroke-width="1.3"/><ellipse cx="1263.3" cy="667.9" rx="4.5" ry="1.6" fill="#5a5a5a"/><ellipse cx="1293.7" cy="667.9" rx="4.5" ry="1.6" fill="#5a5a5a"/><ellipse cx="1325.0" cy="667.9" rx="4.5" ry="1.6" fill="#5a5a5a"/><path d="M1258.0,681.1 L1345.0,681.1" stroke="#222" stroke-width="1.2"/><path d="M1260.0,684.6 C1250.0,683.6 1252.0,676.6 1260.0,676.6" stroke="#4a4a4a" stroke-width="1.2" fill="none"/><path d="M1262.0,685.6 L1345.0,685.6" stroke="#7a7a7a" stroke-width="1.3"/><ellipse cx="1266.2" cy="679.6" rx="4.5" ry="1.6" fill="#5a5a5a"/><ellipse cx="1296.9" cy="679.6" rx="4.5" ry="1.6" fill="#5a5a5a"/><ellipse cx="1328.4" cy="679.6" rx="4.5" ry="1.6" fill="#5a5a5a"/></g>
<line x1="1245" y1="693.4" x2="1362" y2="693.4" stroke="#9a9a9a" stroke-width="2"/>
<g stroke="#0a0a0a" stroke-width="1.3">
<path d="M1248,712 V724 M1251,712 V724 M1254,712 V724 M1257,712 V724 M1260,712 V724 M1263,712 V724 M1266,712 V724 M1269,712 V724 M1275,712 V724 M1278,712 V724 M1281,712 V724 M1284,712 V724 M1287,712 V724 M1290,712 V724 M1293,712 V724 M1296,712 V724 M1299,712 V724 M1302,712 V724 M1305,712 V724 M1308,712 V724 M1311,712 V724 M1314,712 V724 M1324,712 V724 M1327,712 V724 M1330,712 V724 M1333,712 V724 M1336,712 V724 M1339,712 V724 M1342,712 V724 M1345,712 V724 M1348,712 V724 M1351,712 V724 M1354,712 V724 M1357,712 V724 M1360,712 V724"/>
</g>

<!-- railing -->
<path d="M1139,713.5 L1260,712 C1320,711 1350,710 1374,706 C1395,702 1416,692 1418,677" stroke="#9a9a00" stroke-width="2" fill="none"/>
<g stroke="#eaea00" stroke-width="3.2" fill="none" stroke-linecap="round">
<path d="M1120,614.5 L1338,613 C1360,614 1380,620 1395,632 C1410,645 1418,660 1418,675 C1416,690 1395,700 1374,704 C1350,708 1320,709 1260,710 L1139,711"/>
</g>
<g stroke="#d8d800" stroke-width="3.2">
<line x1="1152.5" y1="618" x2="1152.5" y2="641"/><line x1="1199.5" y1="618" x2="1199.5" y2="641"/>
<line x1="1172.5" y1="713" x2="1172.5" y2="738"/><line x1="1221.5" y1="713" x2="1221.5" y2="738"/><line x1="1271" y1="712" x2="1271" y2="736"/><line x1="1320" y1="711" x2="1320" y2="735"/><line x1="1374" y1="706" x2="1374" y2="730"/><line x1="1410.5" y1="691" x2="1410.5" y2="714"/><line x1="1409" y1="652" x2="1409" y2="675"/><line x1="1392.3" y1="634" x2="1392.3" y2="657"/><line x1="1348" y1="615" x2="1348" y2="625"/>
</g>

<!-- ========== cab ========== -->
<path d="M962,614 L1124,614 L1125,732 L1093,741 C1060,770 1010,795 955,806 L956,852 L943,853 L931,742 C935,700 948,650 962,614 Z" fill="#030303"/>
<path d="M958,616 L966,616 C952,650 940,700 938,742 L945,853 L940,853 L930,742 C933,700 945,650 958,616 Z" fill="#3a3a3a"/>
<!-- cab right-side grille area (body side continuing under cab) -->
<!-- glass -->
<path d="M987,618 L1044,618 L1044,776 L1022,776 C1000,780 975,790 960,795 L961,734 C965,700 975,670 985,645 Z" fill="url(#gl)"/>
<path d="M1058,618 L1091,618 C1097,640 1098,680 1096,718 L1089,738 C1080,750 1070,760 1058,766 Z" fill="#c6c8c6"/>
<path d="M1058,708 C1075,698 1090,685 1097,672 L1096,718 L1094,736 C1084,752 1070,766 1058,773 Z" fill="#a8a8a2"/>
<path d="M961,737 C980,748 1005,757 1025,755 C1033,754 1040,748 1044,742 L1044,776 L1022,776 C1000,780 975,790 960,795 Z" fill="#2e2e2e"/>
<path d="M961,737 C980,748 1005,757 1025,755 C1033,754 1040,748 1044,742 L1044,746 C1040,752 1033,758 1025,759 C1005,761 980,752 961,741 Z" fill="#8a8a88"/>
<path d="M969,618 L987,618 L985,645 C983,660 975,680 970,693 L962,690 Z" fill="#030303"/>
<rect x="1044" y="616" width="8" height="160" fill="#3a3a3a"/>
<rect x="1052" y="616" width="7" height="160" fill="#050505"/>
<path d="M960,770 L990,764 C998,768 1000,782 996,800 L961,806 Z" fill="#2e2e2e"/>
<path d="M1022,744 L1050,743 L1050,770 L1024,772 Z" fill="#c4c400"/>
<path d="M996.7,770 L1022.5,768 L1022.5,783 L996.7,785 Z" fill="#cccc00"/>
<!-- steering column -->
<path d="M998.5,716 L1003.5,718 L983,764 L977.5,762 Z" fill="#d8d800"/>
<path d="M1003.5,718 L1010,722 L989,767 L983,764 Z" fill="#333"/>
<path d="M1010,722 L1014,726 L993,770 L988.5,768 Z" fill="#d8d800"/>
<path d="M960,780 C965,772 985,770 995,776 L996,806 L961,810 Z" fill="#363636"/>
<ellipse cx="1010.6" cy="712.8" rx="23.5" ry="7.5" transform="rotate(29 1010.6 712.8)" fill="none" stroke="#050505" stroke-width="3.2"/>
<line x1="1009" y1="699" x2="1010" y2="712" stroke="#050505" stroke-width="2"/>
<!-- door lower -->
<path d="M955,806.7 C990,800 1030,790 1060,775 C1075,765 1085,752 1093,740 L1124,732 L1126,752 L1126,852 L956.7,852 Z" fill="#bcbc00"/>
<path d="M1062,782 C1070,770 1080,758 1093,740 L1124,732 L1126,852 L1062,852 Z" fill="#c0c000"/>
<path d="M1062,782 C1058,800 1056,830 1060,852" stroke="#b4b400" stroke-width="1" fill="none"/>
<path d="M1112,754 C1118,748 1121,740 1124,732 L1127,736 L1127,754 Z" fill="#e8e800"/>
<rect x="1086.6" y="757.5" width="40" height="90" fill="#c4c400"/>
<path d="M1086.6,757.5 v90" stroke="#a8a800" stroke-width="0.8"/>
<rect x="1089.4" y="763.0" width="12.2" height="1" fill="#303000"/>
<rect x="1089.4" y="764.0" width="12.2" height="1.3" fill="#e0e000"/>
<rect x="1089.4" y="767.6" width="12.2" height="1" fill="#303000"/>
<rect x="1089.4" y="768.6" width="12.2" height="1.3" fill="#e0e000"/>
<rect x="1089.4" y="772.2" width="12.2" height="1" fill="#303000"/>
<rect x="1089.4" y="773.2" width="12.2" height="1.3" fill="#e0e000"/>
<rect x="1089.4" y="776.8" width="12.2" height="1" fill="#303000"/>
<rect x="1089.4" y="777.8" width="12.2" height="1.3" fill="#e0e000"/>
<rect x="1089.4" y="781.4" width="12.2" height="1" fill="#303000"/>
<rect x="1089.4" y="782.4" width="12.2" height="1.3" fill="#e0e000"/>
<rect x="1089.4" y="786.0" width="12.2" height="1" fill="#303000"/>
<rect x="1089.4" y="787.0" width="12.2" height="1.3" fill="#e0e000"/>
<rect x="1089.4" y="790.6" width="12.2" height="1" fill="#303000"/>
<rect x="1089.4" y="791.6" width="12.2" height="1.3" fill="#e0e000"/>
<rect x="1089.4" y="795.2" width="12.2" height="1" fill="#303000"/>
<rect x="1089.4" y="796.2" width="12.2" height="1.3" fill="#e0e000"/>
<rect x="1089.4" y="799.8" width="12.2" height="1" fill="#303000"/>
<rect x="1089.4" y="800.8" width="12.2" height="1.3" fill="#e0e000"/>
<rect x="1089.4" y="804.4" width="12.2" height="1" fill="#303000"/>
<rect x="1089.4" y="805.4" width="12.2" height="1.3" fill="#e0e000"/>
<rect x="1089.4" y="809.0" width="12.2" height="1" fill="#303000"/>
<rect x="1089.4" y="810.0" width="12.2" height="1.3" fill="#e0e000"/>
<rect x="1089.4" y="813.6" width="12.2" height="1" fill="#303000"/>
<rect x="1089.4" y="814.6" width="12.2" height="1.3" fill="#e0e000"/>
<rect x="1089.4" y="818.2" width="12.2" height="1" fill="#303000"/>
<rect x="1089.4" y="819.2" width="12.2" height="1.3" fill="#e0e000"/>
<rect x="1089.4" y="822.8" width="12.2" height="1" fill="#303000"/>
<rect x="1089.4" y="823.8" width="12.2" height="1.3" fill="#e0e000"/>
<rect x="1089.4" y="827.4" width="12.2" height="1" fill="#303000"/>
<rect x="1089.4" y="828.4" width="12.2" height="1.3" fill="#e0e000"/>
<rect x="1089.4" y="832.0" width="12.2" height="1" fill="#303000"/>
<rect x="1089.4" y="833.0" width="12.2" height="1.3" fill="#e0e000"/>
<rect x="1089.4" y="836.6" width="12.2" height="1" fill="#303000"/>
<rect x="1089.4" y="837.6" width="12.2" height="1.3" fill="#e0e000"/>
<rect x="1089.4" y="841.2" width="12.2" height="1" fill="#303000"/>
<rect x="1089.4" y="842.2" width="12.2" height="1.3" fill="#e0e000"/>
<rect x="1104.4" y="763.0" width="11.2" height="1" fill="#b2b200"/>
<rect x="1104.4" y="764.0" width="11.2" height="1.3" fill="#eeee10"/>
<rect x="1104.4" y="767.6" width="11.2" height="1" fill="#b2b200"/>
<rect x="1104.4" y="768.6" width="11.2" height="1.3" fill="#eeee10"/>
<rect x="1104.4" y="772.2" width="11.2" height="1" fill="#b2b200"/>
<rect x="1104.4" y="773.2" width="11.2" height="1.3" fill="#eeee10"/>
<rect x="1104.4" y="776.8" width="11.2" height="1" fill="#b2b200"/>
<rect x="1104.4" y="777.8" width="11.2" height="1.3" fill="#eeee10"/>
<rect x="1104.4" y="781.4" width="11.2" height="1" fill="#b2b200"/>
<rect x="1104.4" y="782.4" width="11.2" height="1.3" fill="#eeee10"/>
<rect x="1104.4" y="786.0" width="11.2" height="1" fill="#b2b200"/>
<rect x="1104.4" y="787.0" width="11.2" height="1.3" fill="#eeee10"/>
<rect x="1104.4" y="790.6" width="11.2" height="1" fill="#b2b200"/>
<rect x="1104.4" y="791.6" width="11.2" height="1.3" fill="#eeee10"/>
<rect x="1104.4" y="795.2" width="11.2" height="1" fill="#b2b200"/>
<rect x="1104.4" y="796.2" width="11.2" height="1.3" fill="#eeee10"/>
<rect x="1104.4" y="799.8" width="11.2" height="1" fill="#b2b200"/>
<rect x="1104.4" y="800.8" width="11.2" height="1.3" fill="#eeee10"/>
<rect x="1104.4" y="804.4" width="11.2" height="1" fill="#b2b200"/>
<rect x="1104.4" y="805.4" width="11.2" height="1.3" fill="#eeee10"/>
<rect x="1104.4" y="809.0" width="11.2" height="1" fill="#b2b200"/>
<rect x="1104.4" y="810.0" width="11.2" height="1.3" fill="#eeee10"/>
<rect x="1104.4" y="813.6" width="11.2" height="1" fill="#b2b200"/>
<rect x="1104.4" y="814.6" width="11.2" height="1.3" fill="#eeee10"/>
<rect x="1104.4" y="818.2" width="11.2" height="1" fill="#b2b200"/>
<rect x="1104.4" y="819.2" width="11.2" height="1.3" fill="#eeee10"/>
<rect x="1104.4" y="822.8" width="11.2" height="1" fill="#b2b200"/>
<rect x="1104.4" y="823.8" width="11.2" height="1.3" fill="#eeee10"/>
<rect x="1104.4" y="827.4" width="11.2" height="1" fill="#b2b200"/>
<rect x="1104.4" y="828.4" width="11.2" height="1.3" fill="#eeee10"/>
<rect x="1104.4" y="832.0" width="11.2" height="1" fill="#b2b200"/>
<rect x="1104.4" y="833.0" width="11.2" height="1.3" fill="#eeee10"/>
<rect x="1104.4" y="836.6" width="11.2" height="1" fill="#b2b200"/>
<rect x="1104.4" y="837.6" width="11.2" height="1.3" fill="#eeee10"/>
<rect x="1104.4" y="841.2" width="11.2" height="1" fill="#b2b200"/>
<rect x="1104.4" y="842.2" width="11.2" height="1.3" fill="#eeee10"/>
<path d="M999,815 L1031.5,809 L1031.5,822 L1000,823 Z" fill="#333"/>
<path d="M931.7,743 L936,741 L944,850 L939,852 Z" fill="#f0f000"/>
<path d="M939,848 L946,852 L1100,852 L1100,872 L950,871 C942,870 938,862 939,848 Z" fill="#eaea00"/>
<path d="M976.7,855 L1076.7,855 L1072,871.7 L982,872 Z" fill="#e2e200"/>
<path d="M913.3,794 C913,790 916,790 920,790 L935,790 L935,830 L918,830 C914,830 913,826 913,822 Z" fill="#eeee00"/>
<!-- roof -->
<path d="M960.7,581.5 L989,574 L1101,575.4 C1108,577 1111,582 1111.5,588 L1115.6,614 L960.7,614 Z" fill="#eeee00"/>
<path d="M954.6,566 L985,566 C989,568 990,576 989,581.5 L955,581.5 Z" fill="#e6e600"/>
<path d="M956.7,594.7 L990,594.7 C993,598 994,605 993.3,607 L957,607 Z" fill="#e0e000"/>
<path d="M960.7,606 L1115.6,606 L1115.6,616 L960.7,616 Z" fill="#e8e800"/>
<path d="M1003.5,572.3 L1060.6,572.3 L1079,579.4 L1083,604 L1005.6,605 Z" fill="#3e3e3e"/>
<path d="M1007.6,596.8 L1046,595.7 L1081,604 L1005.6,605 Z" fill="#2a2a2a"/>
<path d="M1007.6,596.8 L1046,595.7 L1081,604" stroke="#9a9a9a" stroke-width="1.2" fill="none"/>
</svg>
<div id="dim">*Dimetric</div>
<svg id="ui" width="1920" height="1080" viewBox="0 0 1920 1080">
<defs>
<linearGradient id="tb" x1="0" y1="0" x2="0" y2="1"><stop offset="0" stop-color="#eceef2"/><stop offset="1" stop-color="#d8dbe0"/></linearGradient>
<linearGradient id="lg" x1="0" y1="0" x2="0" y2="1"><stop offset="0" stop-color="#353a42"/><stop offset="1" stop-color="#1a1d22"/></linearGradient>
<linearGradient id="pg" x1="0" y1="0" x2="1" y2="1"><stop offset="0" stop-color="#ffffff"/><stop offset="1" stop-color="#c8d4e4"/></linearGradient>
<radialGradient id="ball" cx="0.4" cy="0.4" r="0.6"><stop offset="0" stop-color="#e0e0e0"/><stop offset="1" stop-color="#707070"/></radialGradient>
</defs>
<!-- title bar -->
<rect x="0" y="0" width="1920" height="28" fill="#d8dade"/>
<rect x="0" y="0" width="1920" height="1.5" fill="#e8ecf0"/>
<rect x="0" y="2" width="1920" height="1" fill="#d0d4d8"/>
<rect x="0" y="26" width="1920" height="1.5" fill="#dadadc"/>
<rect x="0" y="0" width="6" height="28" fill="#e2291b"/>
<rect x="6" y="1" width="125" height="27" fill="url(#lg)"/>
<rect x="131" y="1" width="10" height="27" fill="#a4a4a4"/>
<rect x="139" y="1" width="2" height="27" fill="#c4c4c4"/>
<path d="M134,10 L138,14.5 L134,19 Z" fill="#3a3a3a"/>
<!-- 3DS glyph -->
<g stroke="#ffffff" stroke-width="1.6" fill="none" stroke-linecap="round" stroke-linejoin="round">
<path d="M17,5 L24,6 L20,11 L21,12.5 L28,11.5"/>
<path d="M21,12.5 C18,16 14,21 10,24"/>
<path d="M10,24 C16,22 20,19 21,15"/>
<path d="M28,11.5 C24,12.5 22,14.5 24,17 C26,19 27,21 20,22"/>
</g>
<!-- toolbar icons -->
<path d="M175,6 L183,6 L187,10 L187,21.5 L175,21.5 Z" fill="url(#pg)" stroke="#7a8696" stroke-width="1"/>
<path d="M183,6 L183,10 L187,10" fill="#e8eef6" stroke="#7a8696" stroke-width="1"/>
<path d="M196,14 L201,14 L198.5,17 Z" fill="#222"/>
<path d="M209,9 L215,9 L217,11 L226,11 L224,19 L209,19 Z" fill="#d2d4d8" stroke="#b8bcc2" stroke-width="1"/>
<path d="M222,5 L226,8 L222,11" fill="none" stroke="#c0c4c8" stroke-width="1.5"/>
<path d="M232,14 L237,14 L234.5,17 Z" fill="#9a9ea4"/>
<rect x="245.5" y="6" width="15" height="15.5" fill="#2b5cc8" stroke="#1a3a90" stroke-width="1"/>
<rect x="248.5" y="7" width="9" height="6" fill="#f0f4fa"/>
<rect x="249" y="16" width="7" height="5" fill="#1a2a60"/>
<path d="M268,14 L273,14 L270.5,17 Z" fill="#222"/>
<path d="M284,6 L292,6 L294,11 L282,11 Z" fill="#dfe8f0" stroke="#7890a8" stroke-width="0.8"/>
<rect x="281" y="11" width="15" height="7" rx="1.5" fill="#c8ccd0" stroke="#505860" stroke-width="1"/>
<rect x="283" y="17" width="11" height="4" fill="#f4f4f4" stroke="#606870" stroke-width="0.8"/>
<path d="M303,14 L308,14 L305.5,17 Z" fill="#222"/>
<path d="M320,10 C326,5 333,9 331,15 C330,18 327,19 324,19" fill="none" stroke="#b8bcc2" stroke-width="2.2"/>
<path d="M317,8 L318,14 L324,12 Z" fill="#b8bcc2"/>
<path d="M340,14 L345,14 L342.5,17 Z" fill="#9a9ea4"/>
<rect x="350" y="3" width="36" height="23" fill="#c9ccd2" stroke="#9aa0a8" stroke-width="1"/>
<rect x="350.5" y="3.5" width="22" height="22" fill="#a9adb4"/>
<path d="M357,7 L357,20 L360,17 L362.5,22 L364.5,21 L362,16 L366,16 Z" fill="#fff" stroke="#333" stroke-width="1"/>
<path d="M376,14 L381,14 L378.5,17 Z" fill="#222"/>
<rect x="393" y="6" width="8" height="16" rx="4" fill="#222"/>
<circle cx="397" cy="10" r="2.6" fill="#d82020"/>
<circle cx="397" cy="18" r="2.6" fill="#20b020"/>
<rect x="412" y="11" width="15" height="10" fill="#f4f4f0" stroke="#6a6a6a" stroke-width="1"/>
<path d="M414,14 H425 M414,17 H425" stroke="#888" stroke-width="0.8"/>
<path d="M416,10 C418,5 424,5 428,8 L425,12 Z" fill="#e6b050" stroke="#906020" stroke-width="0.8"/>
<rect x="435.5" y="6.5" width="15" height="14" fill="#f4f6f8" stroke="#6a7a8a" stroke-width="1"/>
<path d="M438,9.5 h2 v2 h-2z M438,13.5 h2 v2 h-2z" fill="none" stroke="#506070" stroke-width="0.8"/>
<path d="M442,10.5 H448 M442,14.5 H448 M442,18 H448" stroke="#506070" stroke-width="1"/>
<path d="M437.5,17.5 L439,19.5 L442,15.5" stroke="#20a020" stroke-width="1.5" fill="none"/>
<path d="M458,14 L463,14 L460.5,17 Z" fill="#222"/>
<!-- right title icons -->
<text x="1820" y="20" font-family="Liberation Sans" font-size="15" fill="#303030">?</text>
<path d="M1841,14 L1846,14 L1843.5,17 Z" fill="#333"/>
<rect x="1856" y="17" width="12" height="3" fill="none" stroke="#404040" stroke-width="1"/>
<rect x="1881" y="8.5" width="11" height="8" fill="none" stroke="#404040" stroke-width="1.3"/>
<rect x="1877" y="12" width="11" height="8.5" fill="#dcdfe4" stroke="#404040" stroke-width="1.3"/>
<path d="M1903,9 L1915,20 M1915,9 L1903,20" stroke="#404040" stroke-width="2.2"/>
<path d="M1903,9 L1915,20 M1915,9 L1903,20" stroke="#dcdfe4" stroke-width="0.8"/>
<!-- heads-up toolbar -->
<g>
<circle cx="819" cy="40.5" r="5" fill="url(#ball)" stroke="#606060" stroke-width="1"/>
<line x1="822" y1="44" x2="828" y2="50" stroke="#6080c0" stroke-width="2.5"/>
<circle cx="842" cy="40.5" r="5" fill="url(#ball)" stroke="#606060" stroke-width="1"/>
<line x1="845" y1="44" x2="851" y2="50" stroke="#6080c0" stroke-width="2.5"/>
<line x1="861" y1="38" x2="871" y2="49" stroke="#6a8ac8" stroke-width="3.5"/>
<path d="M867,37 L875,37 M867,37 L870,34.5" stroke="#6a8ac8" stroke-width="1.3" fill="none"/>
<rect x="883" y="36" width="13" height="13" fill="#3060b0"/>
<path d="M885,38 v10 M894,38 v10" stroke="#d0b020" stroke-width="2"/>
<rect x="906" y="39" width="10" height="10" fill="#5a8ad0"/>
<path d="M910,36 L920,36 L920,45" stroke="#c02020" stroke-width="1" fill="none"/>
<path d="M929,44 L934,44 L931.5,46.5 Z" fill="#8a8a8a"/>
<path d="M943,39 L950,36 L957,36 L957,47 L950,50 L943,50 Z" fill="#4a7ac8" stroke="#d0d0d0" stroke-width="0.8"/>
<rect x="943" y="39" width="7" height="11" fill="#0a0a0a" stroke="#c0c0c0" stroke-width="0.8"/>
<path d="M966,44 L971,44 L968.5,46.5 Z" fill="#8a8a8a"/>
<circle cx="983" cy="45" r="3.5" fill="url(#ball)"/><circle cx="990" cy="46" r="3.5" fill="url(#ball)"/>
<path d="M1003,44 L1008,44 L1005.5,46.5 Z" fill="#8a8a8a"/>
<circle cx="1024" cy="43" r="7.5" fill="#30a030"/>
<path d="M1024,43 L1024,35.5 A7.5,7.5 0 0 1 1031.5,43 Z" fill="#e03030"/>
<path d="M1024,43 L1016.5,43 A7.5,7.5 0 0 1 1024,35.5 Z" fill="#3060d0"/>
<circle cx="1047" cy="41" r="6" fill="#30a030"/>
<path d="M1047,41 L1047,35 A6,6 0 0 1 1053,41 Z" fill="#e03030"/>
<path d="M1047,41 L1041,41 A6,6 0 0 1 1047,35 Z" fill="#3060d0"/>
<rect x="1040" y="46" width="14" height="4" fill="#d0d0d0"/>
<path d="M1040,48 h2 M1044,48 h2 M1048,48 h2 M1052,48 h2" stroke="#111" stroke-width="2"/>
<path d="M1063,44 L1068,44 L1065.5,46.5 Z" fill="#8a8a8a"/>
<rect x="1076.5" y="37.5" width="14" height="10" fill="#4a4a4a" stroke="#b0b0b0" stroke-width="1"/>
<path d="M1079,45 L1084,40 L1088,45" stroke="#c8a040" stroke-width="1" fill="none"/>
<path d="M1086,37 C1088,34 1091,35 1092,36 L1089,39 Z" fill="#d09040"/>
<rect x="1082" y="48" width="4" height="3" fill="#b0b0b0"/>
<path d="M1100,44 L1105,44 L1102.5,46.5 Z" fill="#8a8a8a"/>
</g>
<!-- viewport top-right icons -->
<g fill="none" stroke="#c8c8c8" stroke-width="1.3">
<rect x="1805.5" y="38" width="10" height="10"/>
<rect x="1829" y="38" width="10" height="10"/>
</g>
<path d="M1811,40 L1808,43 L1811,46 Z M1813,40 v6" fill="#c8c8c8" stroke="#c8c8c8" stroke-width="0.8"/>
<path d="M1833,40 L1836,43 L1833,46 Z M1831,40 v6" fill="#c8c8c8" stroke="#c8c8c8" stroke-width="0.8"/>
<rect x="1851" y="46" width="10" height="3" fill="#c8c8c8"/>
<rect x="1876" y="38" width="9" height="7" fill="none" stroke="#c8c8c8" stroke-width="1.3"/>
<rect x="1872.5" y="41.5" width="9" height="7.5" fill="#000" stroke="#c8c8c8" stroke-width="1.3"/>
<path d="M1898,38 L1909,49 M1909,38 L1898,49" stroke="#d0d0d0" stroke-width="2.2"/>
<!-- left edge -->
<rect x="0" y="28" width="1" height="1052" fill="#b4b4b4"/>
<rect x="1" y="28" width="1" height="1052" fill="#141414"/>
<rect x="2" y="28" width="1" height="1052" fill="#e0e0e0"/>
<rect x="0" y="535" width="9" height="38" fill="#e2e2e6"/>
<rect x="9" y="535" width="1" height="38" fill="#0a0a0a"/>
<path d="M7,543.5 L4,546 L7,548.5 Z M7,552 L4,554.5 L7,557 Z M7,561 L4,563.5 L7,566 Z" fill="#303030"/>
<!-- triad -->
<path d="M39,1025 L39,1003" stroke="#1a8a1a" stroke-width="4.5"/>
<path d="M34.5,1005 L39,995 L43.5,1005 Z" fill="#40c040"/>
<path d="M35.5,987 L38,990 L40.5,987 M38,990 v4" stroke="#20a020" stroke-width="0.9" fill="none"/>
<path d="M39,1025 L60,1028" stroke="#d01818" stroke-width="4.5"/>
<path d="M57,1023.5 L68,1029 L57,1032.5 Z" fill="#f04848"/>
<path d="M67,1024 L72,1031 M72,1024 L67,1031" stroke="#e02020" stroke-width="1"/>
<path d="M39,1025 L30,1033" stroke="#1818b8" stroke-width="5"/>
<path d="M25.5,1033.5 h5 l-5,5.5 h5" stroke="#2020c0" stroke-width="1" fill="none"/>
<!-- bottom edge line -->
<rect x="3" y="1078" width="1917" height="2" fill="#b8c8d8"/>
<rect x="245" y="1078" width="160" height="2" fill="#e8ecf0"/>
<rect x="470" y="1078" width="158" height="2" fill="#e8ecf0"/>
</svg>
<div id="logo"><b>SOLID</b>WORKS</div>
<div id="ttl">Digger [Read-only]</div>
</body></html>
